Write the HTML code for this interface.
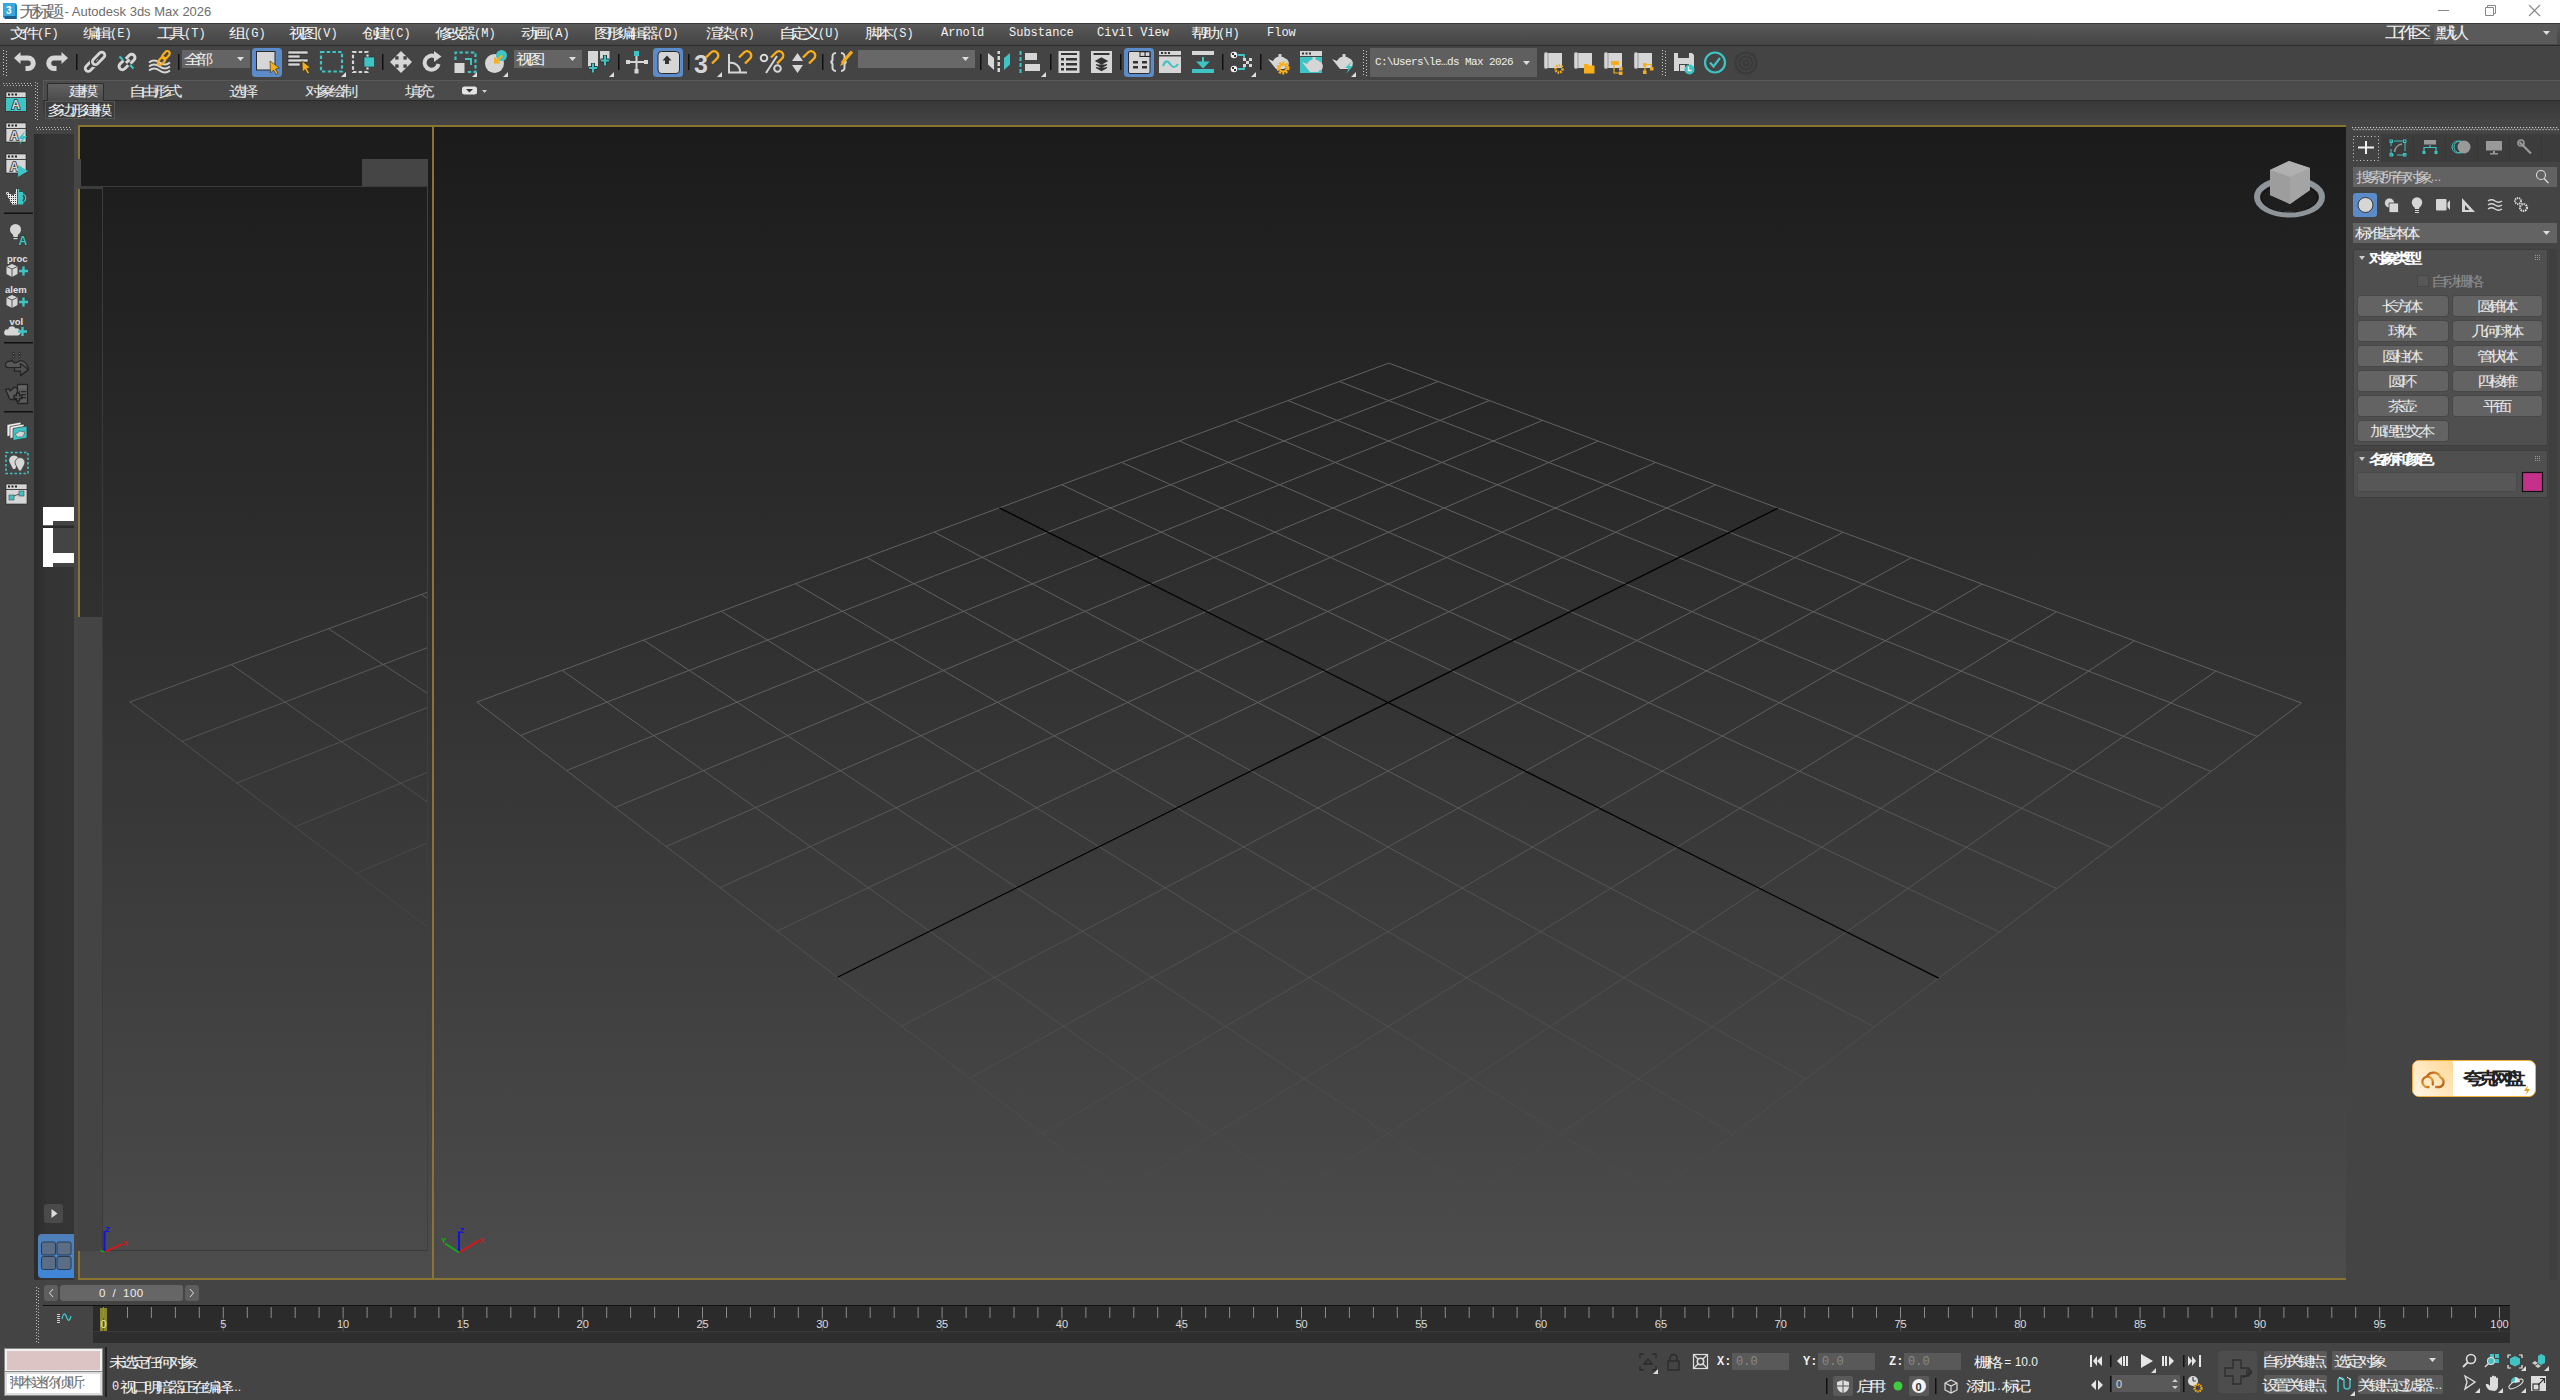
<!DOCTYPE html><html><head><meta charset="utf-8"><style>
*{margin:0;padding:0;box-sizing:border-box}
html,body{width:2560px;height:1400px;overflow:hidden;background:#444;font-family:"Liberation Sans",sans-serif;color:#ddd}
.a{position:absolute}
.t{position:absolute;white-space:nowrap;font-size:12px;line-height:14px}
.m{font-family:"Liberation Mono",monospace}
.c{display:inline-block;width:1em;text-align:center;font-style:normal;font-family:"Liberation Sans",sans-serif;transform:scale(1.5,1.2)}
.btn{position:absolute;background:#636363;border-radius:3px;box-shadow:0 0 0 1px #474747;text-align:center;font-size:12px;line-height:20px;color:#e6e6e6;white-space:nowrap}
svg{position:absolute;overflow:visible}
</style></head><body>

<div class="a" style="left:0;top:0;width:2560px;height:23px;background:#fff"></div>
<svg style="left:0;top:0" width="24" height="23"><path d="M3 3H15L17 5V19H5L3 17Z" fill="#2784c4"/><path d="M3 3H15V16H3Z" fill="#38a8e0"/><rect x="5" y="16" width="11" height="3" fill="#1d5f8f"/><text x="6" y="13.5" font-size="10" font-weight="bold" fill="#fff" font-family="Liberation Sans">3</text></svg>
<div class="t" style="left:22px;top:4px;color:#6e6e6e;font-size:13px;line-height:15px"><i class="c">无</i><i class="c">标</i><i class="c">题</i> - Autodesk 3ds Max 2026</div>
<svg style="left:2430px;top:0" width="130" height="23"><path d="M8 10.5H19" stroke="#888" stroke-width="1"/><path d="M55.5 7.5H63.5V15.5H55.5Z M57.5 7.5V5.5H65.5V13.5H63.5" fill="none" stroke="#888" stroke-width="1"/><path d="M99 5L110 16M110 5L99 16" stroke="#888" stroke-width="1.1"/></svg>
<div class="a" style="left:0;top:23px;width:2560px;height:22px;background:linear-gradient(#595959,#4e4e4e 50%,#454545);border-top:1px solid #3a3a3a"></div>
<div class="a" style="left:0;top:45px;width:2560px;height:1px;background:#2b2b2b"></div>
<div class="t m" style="left:13px;top:25px;color:#f2f2f2;font-size:12px;line-height:16px"><i class="c">文</i><i class="c">件</i>(F)</div>
<div class="t m" style="left:86px;top:25px;color:#f2f2f2;font-size:12px;line-height:16px"><i class="c">编</i><i class="c">辑</i>(E)</div>
<div class="t m" style="left:160px;top:25px;color:#f2f2f2;font-size:12px;line-height:16px"><i class="c">工</i><i class="c">具</i>(T)</div>
<div class="t m" style="left:232px;top:25px;color:#f2f2f2;font-size:12px;line-height:16px"><i class="c">组</i>(G)</div>
<div class="t m" style="left:292px;top:25px;color:#f2f2f2;font-size:12px;line-height:16px"><i class="c">视</i><i class="c">图</i>(V)</div>
<div class="t m" style="left:365px;top:25px;color:#f2f2f2;font-size:12px;line-height:16px"><i class="c">创</i><i class="c">建</i>(C)</div>
<div class="t m" style="left:438px;top:25px;color:#f2f2f2;font-size:12px;line-height:16px"><i class="c">修</i><i class="c">改</i><i class="c">器</i>(M)</div>
<div class="t m" style="left:524px;top:25px;color:#f2f2f2;font-size:12px;line-height:16px"><i class="c">动</i><i class="c">画</i>(A)</div>
<div class="t m" style="left:597px;top:25px;color:#f2f2f2;font-size:12px;line-height:16px"><i class="c">图</i><i class="c">形</i><i class="c">编</i><i class="c">辑</i><i class="c">器</i>(D)</div>
<div class="t m" style="left:709px;top:25px;color:#f2f2f2;font-size:12px;line-height:16px"><i class="c">渲</i><i class="c">染</i>(R)</div>
<div class="t m" style="left:782px;top:25px;color:#f2f2f2;font-size:12px;line-height:16px"><i class="c">自</i><i class="c">定</i><i class="c">义</i>(U)</div>
<div class="t m" style="left:868px;top:25px;color:#f2f2f2;font-size:12px;line-height:16px"><i class="c">脚</i><i class="c">本</i>(S)</div>
<div class="t m" style="left:941px;top:25px;color:#f2f2f2;font-size:12px;line-height:16px">Arnold</div>
<div class="t m" style="left:1009px;top:25px;color:#f2f2f2;font-size:12px;line-height:16px">Substance</div>
<div class="t m" style="left:1097px;top:25px;color:#f2f2f2;font-size:12px;line-height:16px">Civil View</div>
<div class="t m" style="left:1194px;top:25px;color:#f2f2f2;font-size:12px;line-height:16px"><i class="c">帮</i><i class="c">助</i>(H)</div>
<div class="t m" style="left:1267px;top:25px;color:#f2f2f2;font-size:12px;line-height:16px">Flow</div>
<div class="t" style="left:2388px;top:26px;color:#eee;font-size:13px"><i class="c">工</i><i class="c">作</i><i class="c">区</i>:</div>
<div class="a" style="left:2434px;top:24px;width:123px;height:20px;background:#5a5a5a"></div>
<div class="t" style="left:2439px;top:26px;color:#eee;font-size:13px"><i class="c">默</i><i class="c">认</i></div>
<svg style="left:2543px;top:31px" width="8" height="5"><path d="M0 0H7L3.5 4Z" fill="#ddd"/></svg>
<div class="a" style="left:0;top:46px;width:2560px;height:34px;background:#444"></div>
<svg style="left:0;top:0" width="2560" height="82"><rect x="3" y="50" width="1" height="1" fill="#ccc"/><rect x="6" y="51" width="1" height="1" fill="#ccc"/><rect x="3" y="53" width="1" height="1" fill="#ccc"/><rect x="6" y="54" width="1" height="1" fill="#ccc"/><rect x="3" y="56" width="1" height="1" fill="#ccc"/><rect x="6" y="57" width="1" height="1" fill="#ccc"/><rect x="3" y="59" width="1" height="1" fill="#ccc"/><rect x="6" y="60" width="1" height="1" fill="#ccc"/><rect x="3" y="62" width="1" height="1" fill="#ccc"/><rect x="6" y="63" width="1" height="1" fill="#ccc"/><rect x="3" y="65" width="1" height="1" fill="#ccc"/><rect x="6" y="66" width="1" height="1" fill="#ccc"/><rect x="3" y="68" width="1" height="1" fill="#ccc"/><rect x="6" y="69" width="1" height="1" fill="#ccc"/><rect x="3" y="71" width="1" height="1" fill="#ccc"/><rect x="6" y="72" width="1" height="1" fill="#ccc"/><rect x="3" y="74" width="1" height="1" fill="#ccc"/><rect x="6" y="75" width="1" height="1" fill="#ccc"/><g fill="none" stroke="#d6d6d6" stroke-width="5"><path d="M19 58H28A5.25 5.25 0 0 1 28 68.5H25.5"/></g><path d="M14 58L20.5 52V64Z" fill="#d6d6d6"/><g transform="translate(82,0) scale(-1,1)"><g fill="none" stroke="#d6d6d6" stroke-width="5"><path d="M19 58H28A5.25 5.25 0 0 1 28 68.5H25.5"/></g><path d="M14 58L20.5 52V64Z" fill="#d6d6d6"/></g><rect x="76" y="54" width="1.5" height="16" fill="#111"/><g fill="none" stroke-width="2.8"><rect x="-7.5" y="-3" width="15" height="6" rx="3" transform="translate(91.4,65.1) rotate(-45)" stroke="#d6d6d6"/><rect x="-7.5" y="-3" width="15" height="6" rx="3" transform="translate(98.6,58.4) rotate(-45)" stroke="#444" stroke-width="5.5"/><rect x="-7.5" y="-3" width="15" height="6" rx="3" transform="translate(98.6,58.4) rotate(-45)" stroke="#d6d6d6"/></g><g fill="none" stroke="#d6d6d6" stroke-width="3"><path d="M123.5 60.5L120 64A3.3 3.3 0 0 0 124.7 68.7L128.2 65.2"/><path d="M126 63L129.5 59.5M130.5 63.5L134 60A3.3 3.3 0 0 0 129.3 55.3L125.8 58.8"/></g><path d="M119.5 56.5L123 60M130 65L133.5 68.5" stroke="#3ec4c4" stroke-width="2.2"/><g fill="none" stroke="#d6d6d6" stroke-width="2"><path d="M149 62.5q5 -4 10.5 0t10.5 0M149 66.5q5 -4 10.5 0t10.5 0M149 70.5q5 -4 10.5 0t10.5 0"/></g><g fill="none" stroke="#f6ae1a" stroke-width="2.2"><rect x="-4.5" y="-2.4" width="9" height="4.8" rx="2.4" transform="translate(161.5,61) rotate(-50)"/><rect x="-4.5" y="-2.4" width="9" height="4.8" rx="2.4" transform="translate(166,55) rotate(-50)"/></g><rect x="178" y="54" width="1.5" height="16" fill="#111"/><rect x="182" y="50" width="68" height="18" fill="#646464"/><path d="M237 57.0h7l-3.5 4z" fill="#ddd"/><rect x="252" y="48" width="30" height="29" rx="3.5" fill="#5b8bc9"/><rect x="256.5" y="51.5" width="18.5" height="18.5" fill="#d6d6d6" stroke="#2a2a2a" stroke-width="1"/><path d="M270 61L279.5 68L275.5 69L278 73.5L276 74.5L273.5 70L270.5 73Z" fill="#f6ae1a" stroke="#2a2a2a" stroke-width="0.6"/><g fill="#d6d6d6" stroke="#2a2a2a" stroke-width=".6"><rect x="288" y="51" width="20" height="3"/><rect x="288" y="55" width="12" height="3"/><rect x="288" y="59" width="20" height="3"/><rect x="288" y="63" width="12" height="3"/></g><path d="M302 61L310.5 67.5L307 68.5L309.5 73L307.5 74L305 69.5L302.5 72Z" fill="#f6ae1a" stroke="#2a2a2a" stroke-width="0.6"/><rect x="321" y="52" width="21" height="19.5" fill="none" stroke="#3ec4c4" stroke-width="2.2" stroke-dasharray="3.5 2.2"/><path d="M346 77L346 72L341 77Z" fill="#ddd"/><rect x="353" y="52" width="14.5" height="20" fill="none" stroke="#d6d6d6" stroke-width="2.2" stroke-dasharray="3.5 2.2"/><rect x="364" y="57" width="10.5" height="10" fill="#3ec4c4" stroke="#2a2a2a" stroke-width=".6"/><rect x="382" y="54" width="1.5" height="16" fill="#111"/><path d="M401 51L412 62L401 73L390 62Z" fill="#d6d6d6"/><g fill="#444"><rect x="395.2" y="56.2" width="3.4" height="3.4"/><rect x="403.4" y="56.2" width="3.4" height="3.4"/><rect x="395.2" y="64.4" width="3.4" height="3.4"/><rect x="403.4" y="64.4" width="3.4" height="3.4"/></g><path d="M438.5 64A7 7 0 1 1 435 56.5" fill="none" stroke="#d6d6d6" stroke-width="4"/><path d="M434 51L441.5 56.5L434 62Z" fill="#d6d6d6"/><path d="M455.5 60V52.5H475.5V72H467" fill="none" stroke="#3ec4c4" stroke-width="2.2" stroke-dasharray="3.5 2.2"/><path d="M465 59H471V65" fill="none" stroke="#3ec4c4" stroke-width="2"/><rect x="454.5" y="63" width="10" height="10" fill="#d6d6d6"/><path d="M477 77L477 72L472 77Z" fill="#ddd"/><circle cx="494.5" cy="63.5" r="9.5" fill="#d6d6d6"/><circle cx="501.5" cy="55.5" r="5.5" fill="#3ec4c4"/><path d="M502 55.5L496 61.5M495 57.5V62.5H500" fill="none" stroke="#f6ae1a" stroke-width="2" /><path d="M502 55.5L496 61.5" stroke="#f6ae1a" stroke-width="2.2"/><path d="M508 77L508 72L503 77Z" fill="#ddd"/><rect x="514" y="50" width="68" height="18" fill="#646464"/><path d="M569 57.0h7l-3.5 4z" fill="#ddd"/><path d="M588 51H598V67H588Z M600 51H609.5V60H600Z" fill="#d6d6d6"/><path d="M593 63V73M588.5 68H597.5M605 55V66M600.5 60.5H609.5" stroke="#333" stroke-width="4"/><path d="M593 63.5V72.5M589 68H597M605 55.5V65.5M601 60.5H609" stroke="#3ec4c4" stroke-width="2.2"/><path d="M614 77L614 72L609 77Z" fill="#ddd"/><rect x="618" y="54" width="1.5" height="16" fill="#111"/><path d="M636.5 56V72M627 62H647" stroke="#d6d6d6" stroke-width="2"/><rect x="634" y="51" width="5" height="5" fill="#3ec4c4"/><rect x="626" y="60" width="4" height="4" fill="#d6d6d6"/><rect x="644" y="60" width="4" height="4" fill="#d6d6d6"/><rect x="634.5" y="69" width="4" height="4.5" fill="#d6d6d6"/><rect x="653" y="48" width="30" height="29" rx="3.5" fill="#5b8bc9"/><rect x="658" y="51.5" width="21.5" height="22" rx="3.5" fill="#d6d6d6" stroke="#2a2a2a" stroke-width="1"/><path d="M662.5 60.5L667 55.5L671.5 60.5H669V64H665V60.5Z" fill="#333"/><rect x="688" y="54" width="1.5" height="16" fill="#111"/><text x="694" y="73" font-family="Liberation Sans" font-weight="bold" font-size="25" fill="#d6d6d6">3</text><path d="M706 57.5L711 52.5A4.2 4.2 0 0 1 717 58.5L712 63.5" fill="none" stroke="#f6ae1a" stroke-width="2.4"/><path d="M722 77L722 72L717 77Z" fill="#ddd"/><path d="M729 54V72.5H747M729 63A9 9 0 0 1 740 72.5" fill="none" stroke="#d6d6d6" stroke-width="2"/><path d="M739 57.5L744 52.5A4.2 4.2 0 0 1 750 58.5L745 63.5" fill="none" stroke="#f6ae1a" stroke-width="2.4"/><circle cx="764" cy="58" r="3.3" fill="none" stroke="#d6d6d6" stroke-width="2"/><circle cx="777.5" cy="68.5" r="3.3" fill="none" stroke="#d6d6d6" stroke-width="2"/><path d="M766 73L777 56" stroke="#d6d6d6" stroke-width="2"/><path d="M771 57.5L776 52.5A4.2 4.2 0 0 1 782 58.5L777 63.5" fill="none" stroke="#f6ae1a" stroke-width="2.4"/><path d="M792 61H803L797.5 53Z M792 65H803L797.5 73Z" fill="#d6d6d6"/><path d="M803 57.5L808 52.5A4.2 4.2 0 0 1 814 58.5L809 63.5" fill="none" stroke="#f6ae1a" stroke-width="2.4"/><rect x="822" y="54" width="1.5" height="16" fill="#111"/><path d="M836 53Q832 53 832.5 58Q833 61.5 830.5 62Q833 62.5 832.5 66Q832 71 836 71M841 53Q845 53 844.5 58Q844 61.5 846.5 62Q844 62.5 844.5 66Q845 71 841 71" fill="none" stroke="#d6d6d6" stroke-width="2"/><path d="M842 63L852 51.5" stroke="#f6ae1a" stroke-width="3.2"/><path d="M840 66L842 62L844 64Z" fill="#f6ae1a"/><rect x="858" y="50" width="117" height="18" fill="#686868"/><path d="M962 57.0h7l-3.5 4z" fill="#ddd"/><rect x="980" y="54" width="1.5" height="16" fill="#111"/><path d="M988 53L994 58V70L988 64.5Z" fill="#d6d6d6"/><path d="M1010 53L1004 58V70L1010 64.5Z" fill="#3ec4c4"/><g fill="#d6d6d6"><rect x="997.5" y="51" width="2.5" height="3"/><rect x="997.5" y="56" width="2.5" height="4"/><rect x="997.5" y="62" width="2.5" height="4"/><rect x="997.5" y="68" width="2.5" height="4"/></g><g fill="#3ec4c4"><rect x="1019.5" y="51" width="2" height="4"/><rect x="1019.5" y="57" width="2" height="4"/><rect x="1019.5" y="63" width="2" height="4"/><rect x="1019.5" y="69" width="2" height="4"/></g><rect x="1025" y="53" width="12" height="7" fill="#d6d6d6"/><rect x="1025" y="64" width="15" height="7" fill="#d6d6d6"/><path d="M1046 77L1046 72L1041 77Z" fill="#ddd"/><rect x="1050" y="54" width="1.5" height="16" fill="#111"/><rect x="1058.5" y="51" width="21" height="22" fill="#d6d6d6"/><g fill="#333"><rect x="1061" y="53" width="16" height="2"/><rect x="1061" y="58" width="3" height="2.5"/><rect x="1066" y="58" width="11" height="2.5"/><rect x="1061" y="63" width="3" height="2.5"/><rect x="1066" y="63" width="11" height="2.5"/><rect x="1061" y="68" width="3" height="2.5"/><rect x="1066" y="68" width="11" height="2.5"/></g><rect x="1091" y="51" width="21" height="22" fill="#d6d6d6"/><rect x="1093.5" y="53" width="16" height="2" fill="#333"/><path d="M1101.5 58L1107 61L1101.5 64L1096 61Z M1096 64.5L1101.5 67.5L1107 64.5 M1096 67.5L1101.5 70.5L1107 67.5" fill="#333" stroke="#333" stroke-width="1.2"/><rect x="1120" y="54" width="1.5" height="16" fill="#111"/><rect x="1124" y="48" width="30" height="29" rx="3.5" fill="#5b8bc9"/><rect x="1128.5" y="51.5" width="21.5" height="22" rx="1.5" fill="#d6d6d6" stroke="#2a2a2a" stroke-width="1"/><rect x="1139.5" y="51.5" width="11" height="5.5" fill="#222"/><rect x="1140.5" y="52.3" width="4" height="3.6" fill="#d6d6d6"/><rect x="1145.6" y="52.3" width="3.8" height="3.6" fill="#d6d6d6"/><g fill="#333"><rect x="1133" y="61" width="5" height="2.5"/><rect x="1142" y="61" width="5" height="2.5"/><rect x="1133" y="66" width="5" height="2.5"/><rect x="1142" y="66" width="5" height="2.5"/></g><rect x="1159" y="51" width="22" height="22" fill="#d6d6d6"/><rect x="1159" y="55" width="22" height="1.5" fill="#444"/><g fill="#333"><rect x="1161" y="52" width="2" height="2"/><rect x="1164.5" y="52" width="2" height="2"/><rect x="1168" y="52" width="2" height="2"/></g><path d="M1163 66Q1166 58 1170 64T1178 64" fill="none" stroke="#3ec4c4" stroke-width="2.2"/><rect x="1192" y="51" width="22" height="4" fill="#d6d6d6"/><rect x="1192" y="69" width="22" height="4" fill="#3ec4c4"/><path d="M1203 57V63M1198.5 62.5L1203 67L1207.5 62.5Z" fill="#3ec4c4" stroke="#3ec4c4" stroke-width="2"/><rect x="1222" y="54" width="1.5" height="16" fill="#111"/><g fill="#eee"><circle cx="1234" cy="55" r="3.3"/><circle cx="1234" cy="69" r="3.3"/></g><g fill="#333"><rect x="1232" y="53" width="2" height="2"/><rect x="1234" y="55" width="2" height="2"/><rect x="1232" y="67" width="2" height="2"/><rect x="1234" y="69" width="2" height="2"/></g><path d="M1238 55H1244V59M1238 69H1244V65" fill="none" stroke="#3ec4c4" stroke-width="1.8"/><g fill="#d6d6d6"><rect x="1243" y="58" width="3" height="3"/><rect x="1249" y="58" width="3" height="3"/><rect x="1246" y="61" width="3" height="3"/><rect x="1243" y="64" width="3" height="3"/><rect x="1249" y="64" width="3" height="3"/></g><path d="M1256 77L1256 72L1251 77Z" fill="#ddd"/><rect x="1260" y="54" width="1.5" height="16" fill="#111"/><path d="M1268 59L1273 61Q1276 56 1280 57Q1284 56 1286 60Q1289 62 1287 66L1284 69H1276Z" fill="#d6d6d6"/><rect x="1278.5" y="54" width="3" height="3" fill="#d6d6d6"/><path d="M1285 59A4 4.5 0 0 1 1286.5 67" fill="none" stroke="#d6d6d6" stroke-width="1.6"/><circle cx="1283" cy="68" r="5" fill="none" stroke="#f6ae1a" stroke-width="3" stroke-dasharray="2 1.2"/><circle cx="1283" cy="68" r="3.5" fill="none" stroke="#f6ae1a" stroke-width="2"/><rect x="1300" y="51" width="22" height="5" fill="#d6d6d6"/><g fill="#333"><rect x="1302" y="52.5" width="2" height="2"/><rect x="1305.5" y="52.5" width="2" height="2"/><rect x="1309" y="52.5" width="2" height="2"/></g><rect x="1300" y="57" width="22" height="16" fill="#3ec4c4"/><path d="M1302 62L1307 64Q1310 59 1314 60Q1318 59 1320 63Q1323 65 1321 69L1318 72H1310Z" fill="#d6d6d6"/><rect x="1312.5" y="57" width="3" height="3" fill="#d6d6d6"/><path d="M1319 62A4 4.5 0 0 1 1320.5 70" fill="none" stroke="#d6d6d6" stroke-width="1.6"/><path d="M1332 59L1337 61Q1340 56 1344 57Q1348 56 1350 60Q1353 62 1351 66L1348 69H1340Z" fill="#d6d6d6"/><rect x="1342.5" y="54" width="3" height="3" fill="#d6d6d6"/><path d="M1349 59A4 4.5 0 0 1 1350.5 67" fill="none" stroke="#d6d6d6" stroke-width="1.6"/><path d="M1352 61L1345 68H1349L1346 74L1353 66H1349Z" fill="#3ec4c4"/><path d="M1356 77L1356 72L1351 77Z" fill="#ddd"/><rect x="1363" y="50" width="1" height="1" fill="#ccc"/><rect x="1366" y="51" width="1" height="1" fill="#ccc"/><rect x="1363" y="53" width="1" height="1" fill="#ccc"/><rect x="1366" y="54" width="1" height="1" fill="#ccc"/><rect x="1363" y="56" width="1" height="1" fill="#ccc"/><rect x="1366" y="57" width="1" height="1" fill="#ccc"/><rect x="1363" y="59" width="1" height="1" fill="#ccc"/><rect x="1366" y="60" width="1" height="1" fill="#ccc"/><rect x="1363" y="62" width="1" height="1" fill="#ccc"/><rect x="1366" y="63" width="1" height="1" fill="#ccc"/><rect x="1363" y="65" width="1" height="1" fill="#ccc"/><rect x="1366" y="66" width="1" height="1" fill="#ccc"/><rect x="1363" y="68" width="1" height="1" fill="#ccc"/><rect x="1366" y="69" width="1" height="1" fill="#ccc"/><rect x="1363" y="71" width="1" height="1" fill="#ccc"/><rect x="1366" y="72" width="1" height="1" fill="#ccc"/><rect x="1363" y="74" width="1" height="1" fill="#ccc"/><rect x="1366" y="75" width="1" height="1" fill="#ccc"/><rect x="1370" y="48" width="167" height="29" fill="#5f5f5f"/><path d="M1523 61h7l-3.5 4z" fill="#ddd"/><path d="M1546 53H1562V68H1546Z" fill="#d6d6d6"/><rect x="1544" y="52" width="4" height="17" rx="2" fill="#d6d6d6" stroke="#555" stroke-width=".5"/><circle cx="1559" cy="69" r="3.5" fill="none" stroke="#f6ae1a" stroke-width="2.6" stroke-dasharray="1.6 1"/><path d="M1576 53H1592V68H1576Z" fill="#d6d6d6"/><rect x="1574" y="52" width="4" height="17" rx="2" fill="#d6d6d6" stroke="#555" stroke-width=".5"/><path d="M1584 64H1588L1589 65.5H1594.5V73.5H1584Z" fill="#f6ae1a"/><path d="M1606 53H1622V68H1606Z" fill="#d6d6d6"/><rect x="1604" y="52" width="4" height="17" rx="2" fill="#d6d6d6" stroke="#555" stroke-width=".5"/><g fill="#f6ae1a"><rect x="1611" y="61" width="8" height="4"/><rect x="1619" y="67" width="3.5" height="3.5"/><rect x="1619" y="71.5" width="3.5" height="3.5"/></g><path d="M1614 65V73H1619" fill="none" stroke="#f6ae1a" stroke-width="1.2"/><path d="M1636 53H1652V68H1636Z" fill="#d6d6d6"/><rect x="1634" y="52" width="4" height="17" rx="2" fill="#d6d6d6" stroke="#555" stroke-width=".5"/><g fill="#f6ae1a"><rect x="1643" y="63" width="3.5" height="3.5"/><rect x="1650" y="67" width="3.5" height="3.5"/><rect x="1643" y="70.5" width="3.5" height="3.5"/></g><path d="M1645 66V71M1646 64.5H1651.5V67" fill="none" stroke="#f6ae1a" stroke-width="1.2"/><rect x="1662" y="50" width="1" height="1" fill="#ccc"/><rect x="1665" y="51" width="1" height="1" fill="#ccc"/><rect x="1662" y="53" width="1" height="1" fill="#ccc"/><rect x="1665" y="54" width="1" height="1" fill="#ccc"/><rect x="1662" y="56" width="1" height="1" fill="#ccc"/><rect x="1665" y="57" width="1" height="1" fill="#ccc"/><rect x="1662" y="59" width="1" height="1" fill="#ccc"/><rect x="1665" y="60" width="1" height="1" fill="#ccc"/><rect x="1662" y="62" width="1" height="1" fill="#ccc"/><rect x="1665" y="63" width="1" height="1" fill="#ccc"/><rect x="1662" y="65" width="1" height="1" fill="#ccc"/><rect x="1665" y="66" width="1" height="1" fill="#ccc"/><rect x="1662" y="68" width="1" height="1" fill="#ccc"/><rect x="1665" y="69" width="1" height="1" fill="#ccc"/><rect x="1662" y="71" width="1" height="1" fill="#ccc"/><rect x="1665" y="72" width="1" height="1" fill="#ccc"/><rect x="1662" y="74" width="1" height="1" fill="#ccc"/><rect x="1665" y="75" width="1" height="1" fill="#ccc"/><path d="M1674 53H1692L1694 55V71H1674Z" fill="#d6d6d6"/><rect x="1678" y="53" width="11" height="5" fill="#444"/><rect x="1679" y="64" width="10" height="7" fill="#444"/><rect x="1680" y="65" width="5" height="6" fill="#d6d6d6"/><circle cx="1689.5" cy="69.5" r="5" fill="#3ec4c4"/><path d="M1688.5 66.5V70.5H1691.5" fill="none" stroke="#eee" stroke-width="1.4"/><circle cx="1715" cy="62.5" r="10" fill="none" stroke="#3ec4c4" stroke-width="2.2"/><path d="M1710 62.5L1713.5 66.5L1720 58" fill="none" stroke="#3ec4c4" stroke-width="2.2"/><g fill="none" stroke="#3a3a3a" stroke-width="2"><circle cx="1746" cy="63" r="10.5"/><circle cx="1746" cy="63" r="6.5"/><circle cx="1746" cy="63" r="2.5"/></g></svg>
<div class="t" style="left:187px;top:52px;color:#eee;font-size:12px"><i class="c">全</i><i class="c">部</i></div>
<div class="t" style="left:519px;top:52px;color:#eee;font-size:12px"><i class="c">视</i><i class="c">图</i></div>
<div class="t m" style="left:1375px;top:55px;color:#eee;font-size:11px;letter-spacing:-0.6px">C:\Users\le…ds Max 2026</div>
<div class="a" style="left:0;top:80px;width:2560px;height:40px;background:#444"></div>
<div class="a" style="left:43px;top:80px;width:2517px;height:20px;background:#4b4b4b;border-top:1px solid #595959;border-left:1px solid #595959"></div>
<div class="a" style="left:43px;top:100px;width:2517px;height:19px;background:linear-gradient(#383838,#424242);border-top:1px solid #2a2a2a"></div>
<div class="a" style="left:47px;top:83px;width:57px;height:18px;background:linear-gradient(#626262,#4a4a4a);border:1px solid #2c2c2c;border-bottom:none;border-radius:2px 2px 0 0"></div>
<div class="t" style="left:72px;top:84px;color:#e6e6e6;font-size:12px"><i class="c">建</i><i class="c">模</i></div>
<div class="t" style="left:132px;top:84px;color:#e6e6e6;font-size:12px"><i class="c">自</i><i class="c">由</i><i class="c">形</i><i class="c">式</i></div>
<div class="t" style="left:232px;top:84px;color:#e6e6e6;font-size:12px"><i class="c">选</i><i class="c">择</i></div>
<div class="t" style="left:308px;top:84px;color:#e6e6e6;font-size:12px"><i class="c">对</i><i class="c">象</i><i class="c">绘</i><i class="c">制</i></div>
<div class="t" style="left:408px;top:84px;color:#e6e6e6;font-size:12px"><i class="c">填</i><i class="c">充</i></div>
<svg style="left:0;top:0" width="500" height="120"><rect x="462" y="86.5" width="15" height="8" rx="2.5" fill="#e4e4e4"/><path d="M466 89H473L469.5 92.5Z" fill="#333"/><path d="M482 90H487L484.5 93Z" fill="#ccc"/><rect x="3" y="83" width="1" height="1" fill="#bbb"/><rect x="4" y="85" width="1" height="1" fill="#bbb"/><rect x="6" y="83" width="1" height="1" fill="#bbb"/><rect x="7" y="85" width="1" height="1" fill="#bbb"/><rect x="9" y="83" width="1" height="1" fill="#bbb"/><rect x="10" y="85" width="1" height="1" fill="#bbb"/><rect x="12" y="83" width="1" height="1" fill="#bbb"/><rect x="13" y="85" width="1" height="1" fill="#bbb"/><rect x="15" y="83" width="1" height="1" fill="#bbb"/><rect x="16" y="85" width="1" height="1" fill="#bbb"/><rect x="18" y="83" width="1" height="1" fill="#bbb"/><rect x="19" y="85" width="1" height="1" fill="#bbb"/><rect x="21" y="83" width="1" height="1" fill="#bbb"/><rect x="22" y="85" width="1" height="1" fill="#bbb"/><rect x="24" y="83" width="1" height="1" fill="#bbb"/><rect x="25" y="85" width="1" height="1" fill="#bbb"/><rect x="27" y="83" width="1" height="1" fill="#bbb"/><rect x="28" y="85" width="1" height="1" fill="#bbb"/><rect x="30" y="83" width="1" height="1" fill="#bbb"/><rect x="31" y="85" width="1" height="1" fill="#bbb"/><rect x="35" y="82" width="1" height="1" fill="#bbb"/><rect x="37" y="83" width="1" height="1" fill="#bbb"/><rect x="35" y="85" width="1" height="1" fill="#bbb"/><rect x="37" y="86" width="1" height="1" fill="#bbb"/><rect x="35" y="88" width="1" height="1" fill="#bbb"/><rect x="37" y="89" width="1" height="1" fill="#bbb"/><rect x="35" y="91" width="1" height="1" fill="#bbb"/><rect x="37" y="92" width="1" height="1" fill="#bbb"/><rect x="35" y="94" width="1" height="1" fill="#bbb"/><rect x="37" y="95" width="1" height="1" fill="#bbb"/><rect x="35" y="97" width="1" height="1" fill="#bbb"/><rect x="37" y="98" width="1" height="1" fill="#bbb"/><rect x="35" y="100" width="1" height="1" fill="#bbb"/><rect x="37" y="101" width="1" height="1" fill="#bbb"/><rect x="35" y="103" width="1" height="1" fill="#bbb"/><rect x="37" y="104" width="1" height="1" fill="#bbb"/><rect x="35" y="106" width="1" height="1" fill="#bbb"/><rect x="37" y="107" width="1" height="1" fill="#bbb"/><rect x="35" y="109" width="1" height="1" fill="#bbb"/><rect x="37" y="110" width="1" height="1" fill="#bbb"/><rect x="35" y="112" width="1" height="1" fill="#bbb"/><rect x="37" y="113" width="1" height="1" fill="#bbb"/><rect x="35" y="115" width="1" height="1" fill="#bbb"/><rect x="37" y="116" width="1" height="1" fill="#bbb"/><rect x="35" y="118" width="1" height="1" fill="#bbb"/><rect x="37" y="119" width="1" height="1" fill="#bbb"/></svg>
<div class="a" style="left:45px;top:101px;width:70px;height:18px;background:#3c3c3c;border:1px solid #565656"></div>
<div class="t" style="left:50px;top:103px;color:#eee;font-size:12px"><i class="c">多</i><i class="c">边</i><i class="c">形</i><i class="c">建</i><i class="c">模</i></div>
<svg style="left:0;top:0" width="80" height="140"><rect x="36" y="127" width="1" height="1" fill="#bbb"/><rect x="37" y="129" width="1" height="1" fill="#bbb"/><rect x="39" y="127" width="1" height="1" fill="#bbb"/><rect x="40" y="129" width="1" height="1" fill="#bbb"/><rect x="42" y="127" width="1" height="1" fill="#bbb"/><rect x="43" y="129" width="1" height="1" fill="#bbb"/><rect x="45" y="127" width="1" height="1" fill="#bbb"/><rect x="46" y="129" width="1" height="1" fill="#bbb"/><rect x="48" y="127" width="1" height="1" fill="#bbb"/><rect x="49" y="129" width="1" height="1" fill="#bbb"/><rect x="51" y="127" width="1" height="1" fill="#bbb"/><rect x="52" y="129" width="1" height="1" fill="#bbb"/><rect x="54" y="127" width="1" height="1" fill="#bbb"/><rect x="55" y="129" width="1" height="1" fill="#bbb"/><rect x="57" y="127" width="1" height="1" fill="#bbb"/><rect x="58" y="129" width="1" height="1" fill="#bbb"/><rect x="60" y="127" width="1" height="1" fill="#bbb"/><rect x="61" y="129" width="1" height="1" fill="#bbb"/><rect x="63" y="127" width="1" height="1" fill="#bbb"/><rect x="64" y="129" width="1" height="1" fill="#bbb"/><rect x="66" y="127" width="1" height="1" fill="#bbb"/><rect x="67" y="129" width="1" height="1" fill="#bbb"/><rect x="69" y="127" width="1" height="1" fill="#bbb"/><rect x="70" y="129" width="1" height="1" fill="#bbb"/></svg>
<div class="a" style="left:34px;top:134px;width:40px;height:1146px;background:linear-gradient(90deg,#2c2c2c,#333 30%,#353535)"></div>
<svg style="left:0;top:0" width="80" height="600"><rect x="6" y="92" width="20" height="19" fill="#d6d6d6" stroke="#222" stroke-width=".6"/><rect x="6" y="97" width="20" height="1" fill="#444"/><g fill="#222"><rect x="8" y="93.5" width="2" height="2"/><rect x="11.5" y="93.5" width="2" height="2"/><rect x="15" y="93.5" width="2" height="2"/></g><rect x="6" y="98" width="20" height="13" fill="#3ec4c4"/><text x="11.5" y="109" font-size="12" font-weight="bold" fill="#d6d6d6" stroke="#333" stroke-width="1.6" paint-order="stroke" font-family="Liberation Sans">A</text><rect x="6" y="123" width="20" height="19" fill="#d6d6d6" stroke="#222" stroke-width=".6"/><rect x="6" y="128" width="20" height="1" fill="#444"/><g fill="#222"><rect x="8" y="124.5" width="2" height="2"/><rect x="11.5" y="124.5" width="2" height="2"/><rect x="15" y="124.5" width="2" height="2"/></g><text x="10" y="140" font-size="12" font-weight="bold" fill="#d6d6d6" stroke="#333" stroke-width="1.6" paint-order="stroke" font-family="Liberation Sans">A</text><path d="M25 131L18 139H22L19 145L27 136H23Z" fill="#3ec4c4"/><rect x="6" y="154" width="20" height="19" fill="#d6d6d6" stroke="#222" stroke-width=".6"/><rect x="6" y="159" width="20" height="1" fill="#444"/><g fill="#222"><rect x="8" y="155.5" width="2" height="2"/><rect x="11.5" y="155.5" width="2" height="2"/><rect x="15" y="155.5" width="2" height="2"/></g><text x="10" y="171" font-size="12" font-weight="bold" fill="#d6d6d6" stroke="#333" stroke-width="1.6" paint-order="stroke" font-family="Liberation Sans">A</text><path d="M18 165L28 171L18 177Z" fill="#3ec4c4"/><defs><pattern id="chk" width="2" height="2" patternUnits="userSpaceOnUse"><rect width="2" height="2" fill="#eaeaea"/><rect x="1" y="1" width="1" height="1" fill="#333"/></pattern></defs><path d="M5.8 193Q7.5 191 9.5 193.5L13 195.5Q15 193.5 16 192V189H17.2V204.5H12Z" fill="url(#chk)"/><path d="M18 189H19.2V192H23V193.5A4.6 4.8 0 0 1 23.5 202.5L23 204.5H18Z" fill="#3ec4c4"/><path d="M22.8 195.2A2.6 3.2 0 0 1 22.8 201" fill="none" stroke="#444" stroke-width="1.6"/><rect x="4" y="212.5" width="29" height="1.5" fill="#111"/><circle cx="15.5" cy="229.5" r="5.5" fill="#d6d6d6"/><path d="M12.5 233H18.5L17.5 237H13.5Z" fill="#d6d6d6"/><rect x="13.5" y="238" width="4" height="1.2" fill="#d6d6d6"/><text x="18.5" y="244.5" font-size="12" font-weight="bold" fill="#3ec4c4" stroke="#333" stroke-width="1" paint-order="stroke" font-family="Liberation Sans">A</text><text x="7" y="262" font-size="9.5" font-weight="bold" fill="#e0e0e0" font-family="Liberation Sans">proc</text><path d="M6.5 266.5L12 264L17.5 266.5V274L12 277L6.5 274Z" fill="#d6d6d6"/><path d="M6.5 266.5L12 269L17.5 266.5M12 269V277" fill="none" stroke="#555" stroke-width="1"/><path d="M19 271H28M23.5 266.5V275.5" stroke="#3ec4c4" stroke-width="2.4"/><text x="5" y="293" font-size="9.5" font-weight="bold" fill="#e0e0e0" font-family="Liberation Sans">alem</text><path d="M6.5 297.5L12 295L17.5 297.5V305L12 308L6.5 305Z" fill="#d6d6d6"/><path d="M6.5 297.5L12 300L17.5 297.5M12 300V308" fill="none" stroke="#555" stroke-width="1"/><path d="M19 302H28M23.5 297.5V306.5" stroke="#3ec4c4" stroke-width="2.4"/><text x="9.5" y="324.5" font-size="9.5" font-weight="bold" fill="#e0e0e0" font-family="Liberation Sans">vol</text><path d="M6.5 335.5A3 3 0 0 1 8 329.5A4 4 0 0 1 15.5 328.5A3 3 0 0 1 18 335.5Z" fill="#d6d6d6"/><path d="M18 331.5H27M22.5 327V336" stroke="#3ec4c4" stroke-width="2.4"/><rect x="4" y="342" width="29" height="1.5" fill="#111"/><g stroke="#232323" stroke-width="1.2" stroke-linejoin="round"><path d="M5.5 366Q5 361 10 361.5L12 360Q13.5 364 16.5 362.5L20.5 360.5Q27 361.5 28.5 369.5L21 375.5V371H14.5V367.5H10Q6 368 5.5 366Z" fill="#585858"/><path d="M14.5 367.5H20.5V363.5L28.5 369.5L20.5 375.5V371H14.5Z" fill="#505050"/></g><g fill="#2a2a2a"><rect x="12.5" y="352" width="2" height="6"/><rect x="18.5" y="352" width="2" height="6"/></g><g fill="#777"><rect x="13" y="353" width="1" height="1"/><rect x="19" y="353" width="1" height="1"/><rect x="13" y="356" width="1" height="1"/><rect x="19" y="356" width="1" height="1"/></g><g stroke="#232323" stroke-width="1.3" stroke-linejoin="round"><path d="M5.5 389.5L9 388.5L10 391L13 388.5L14.5 387L17.5 388.5V399.5H10Z" fill="#5a5a5a"/><rect x="17.5" y="384.5" width="10" height="19" fill="#5c5c5c"/><path d="M14 395.5H16.5V393H19.5V395.5H22V398.5H19.5V401H16.5V398.5H14Z" fill="#555"/></g><rect x="18.5" y="385.5" width="8" height="3" fill="#666"/><g fill="#262626"><rect x="21" y="391" width="5" height="1.3"/><rect x="21" y="394" width="5" height="1.3"/><rect x="21" y="397" width="5" height="1.3"/><rect x="19" y="391" width="1" height="1"/></g><rect x="4" y="411" width="29" height="1.5" fill="#111"/><path d="M7 424.5L21 422V434L7 436.5Z" fill="#eee" stroke="#333" stroke-width=".7"/><path d="M10 426.5L24 424V436L10 438.5Z" fill="#eee" stroke="#333" stroke-width=".7"/><path d="M13 428.5L27 426V438L13 440.5Z" fill="#3ec4c4" stroke="#333" stroke-width=".7"/><path d="M15 434L18 432.5Q19.5 430 22 431.5L25 432Q24 436 21.5 437H17.5Z" fill="#d6d6d6" stroke="#333" stroke-width=".5"/><rect x="6" y="452.5" width="22" height="21" fill="none" stroke="#3ec4c4" stroke-width="1.6" stroke-dasharray="2.5 2"/><path d="M14 455.5A4.8 4.8 0 0 1 18.5 462L15 469H13L9.5 462A4.8 4.8 0 0 1 14 455.5Z" fill="#d6d6d6"/><path d="M20 457.5A5 5 0 0 1 24.7 464L21 471H19L15.3 464A5 5 0 0 1 20 457.5Z" fill="#d6d6d6" stroke="#444" stroke-width=".8"/><rect x="6" y="484" width="21" height="20" fill="#d6d6d6" stroke="#222" stroke-width=".6"/><rect x="6" y="489" width="21" height="1" fill="#444"/><g fill="#222"><rect x="8" y="485.5" width="2" height="2"/><rect x="11.5" y="485.5" width="2" height="2"/><rect x="15" y="485.5" width="2" height="2"/></g><rect x="9" y="495" width="5" height="5" fill="#3ec4c4" stroke="#333" stroke-width=".5"/><rect x="19" y="491" width="5" height="5" fill="#3ec4c4" stroke="#333" stroke-width=".5"/><path d="M14 496L19 494" stroke="#333" stroke-width=".8"/></svg>
<svg style="left:0;top:0" width="80" height="600"><rect x="43" y="507" width="31" height="60" fill="#444"/><path d="M43 507H74V521H53V525.5H43Z M43 528H53V553H74V563H53V567H43Z" fill="#fff"/><rect x="43" y="525.5" width="31" height="2.5" fill="#2a2a2a"/></svg>
<div class="a" style="left:44px;top:1204px;width:19px;height:19px;background:#4a4a4a;border-radius:3px"></div>
<svg style="left:0;top:0" width="80" height="1300"><path d="M51.5 1209L57.5 1213.5L51.5 1218Z" fill="#ddd"/></svg>
<div class="a" style="left:38px;top:1234px;width:36px;height:44px;background:linear-gradient(#4f7fb8,#3f86d8);border-radius:4px 0 0 4px"></div>
<svg style="left:0;top:0" width="80" height="1300"><g fill="#5b6e85" stroke="#2a3a50" stroke-width="1"><rect x="41.5" y="1242" width="14" height="13" rx="2"/><rect x="57" y="1242" width="14" height="13" rx="2"/><rect x="41.5" y="1256.5" width="14" height="13" rx="2"/><rect x="57" y="1256.5" width="14" height="13" rx="2"/></g></svg>
<div class="a" style="left:74px;top:120px;width:4px;height:1160px;background:#464646"></div>
<div class="a" style="left:432px;top:125px;width:1914px;height:1155px;background:#8a7432"></div>
<div class="a" style="left:434px;top:127px;width:1912px;height:1151px;background:linear-gradient(#1b1b1b,#4c4c4c)"></div>
<div class="a" style="left:78px;top:125px;width:356px;height:1155px;background:#8a7432"></div>
<div class="a" style="left:80px;top:127px;width:352px;height:1151px;background:linear-gradient(#1b1b1b,#4c4c4c)"></div>
<svg style="left:434px;top:127px;overflow:hidden" width="1912" height="1151" viewBox="434 127 1912 1151"><defs><linearGradient id="gm" gradientUnits="userSpaceOnUse" x1="0" y1="700" x2="0" y2="1240"><stop offset="0" stop-color="#606060" stop-opacity="1"/><stop offset="1" stop-color="#606060" stop-opacity="0"/></linearGradient></defs><g stroke="url(#gm)" stroke-width="1" fill="none"><line x1="1388.8" y1="363.1" x2="476.9" y2="702.1"/><line x1="1388.8" y1="363.1" x2="2301.4" y2="703.0"/><line x1="1438.2" y1="381.5" x2="520.7" y2="735.4"/><line x1="1339.3" y1="381.5" x2="2257.4" y2="736.4"/><line x1="1489.4" y1="400.6" x2="566.6" y2="770.5"/><line x1="1288.0" y1="400.6" x2="2211.1" y2="771.5"/><line x1="1542.7" y1="420.4" x2="615.1" y2="807.5"/><line x1="1234.7" y1="420.4" x2="2162.4" y2="808.5"/><line x1="1598.0" y1="441.1" x2="666.1" y2="846.5"/><line x1="1179.4" y1="441.0" x2="2111.1" y2="847.4"/><line x1="1655.6" y1="462.5" x2="720.1" y2="887.6"/><line x1="1121.8" y1="462.4" x2="2056.8" y2="888.6"/><line x1="1715.6" y1="484.8" x2="777.1" y2="931.1"/><line x1="1061.8" y1="484.7" x2="1999.5" y2="932.1"/><line x1="1843.2" y1="532.3" x2="901.6" y2="1026.2"/><line x1="934.3" y1="532.1" x2="1874.3" y2="1027.0"/><line x1="1911.2" y1="557.7" x2="969.8" y2="1078.2"/><line x1="866.3" y1="557.3" x2="1805.9" y2="1078.9"/><line x1="1982.2" y1="584.1" x2="1042.4" y2="1133.6"/><line x1="795.4" y1="583.7" x2="1733.0" y2="1134.2"/><line x1="2056.6" y1="611.8" x2="1119.9" y2="1192.7"/><line x1="721.2" y1="611.3" x2="1655.2" y2="1193.2"/><line x1="2134.4" y1="640.8" x2="1202.7" y2="1255.9"/><line x1="643.6" y1="640.1" x2="1572.0" y2="1256.3"/><line x1="2215.9" y1="671.1" x2="1291.6" y2="1323.7"/><line x1="562.2" y1="670.4" x2="1482.9" y2="1323.9"/><line x1="2301.4" y1="703.0" x2="1387.1" y2="1396.6"/><line x1="476.9" y1="702.1" x2="1387.1" y2="1396.6"/></g><g stroke="#000" stroke-width="1.2"><line x1="1778.0" y1="508.1" x2="837.5" y2="977.2"/><line x1="999.4" y1="507.9" x2="1938.7" y2="978.1"/></g></svg>
<svg style="left:102px;top:189px;overflow:hidden" width="326" height="1061" viewBox="102 189 326 1061"><defs><linearGradient id="gl" gradientUnits="userSpaceOnUse" x1="0" y1="650" x2="0" y2="1000"><stop offset="0" stop-color="#5c5c5c" stop-opacity="1"/><stop offset="1" stop-color="#5c5c5c" stop-opacity="0"/></linearGradient></defs><g stroke="url(#gl)" stroke-width="1" fill="none"><line x1="1226.7" y1="297.6" x2="129.8" y2="702.0"/><line x1="1226.7" y1="297.6" x2="2380.6" y2="702.7"/><line x1="1287.7" y1="319.0" x2="181.9" y2="741.4"/><line x1="1166.6" y1="319.7" x2="2325.8" y2="743.6"/><line x1="1351.1" y1="341.3" x2="236.9" y2="783.0"/><line x1="1104.3" y1="342.7" x2="2268.3" y2="786.5"/><line x1="1417.2" y1="364.5" x2="294.9" y2="826.9"/><line x1="1039.7" y1="366.5" x2="2207.7" y2="831.7"/><line x1="1486.2" y1="388.7" x2="356.3" y2="873.4"/><line x1="972.6" y1="391.3" x2="2143.8" y2="879.3"/><line x1="1558.1" y1="413.9" x2="421.5" y2="922.6"/><line x1="903.0" y1="417.0" x2="2076.5" y2="929.5"/><line x1="1633.2" y1="440.3" x2="490.6" y2="974.9"/><line x1="830.6" y1="443.6" x2="2005.3" y2="982.6"/><line x1="1711.7" y1="467.9" x2="564.1" y2="1030.5"/><line x1="755.3" y1="471.4" x2="1930.0" y2="1038.8"/><line x1="1793.9" y1="496.7" x2="642.5" y2="1089.8"/><line x1="676.9" y1="500.3" x2="1850.1" y2="1098.3"/><line x1="1880.1" y1="527.0" x2="726.2" y2="1153.1"/><line x1="595.3" y1="530.4" x2="1765.2" y2="1161.6"/><line x1="1970.4" y1="558.7" x2="815.8" y2="1220.9"/><line x1="510.1" y1="561.8" x2="1675.0" y2="1228.9"/><line x1="2065.2" y1="592.0" x2="911.9" y2="1293.6"/><line x1="421.3" y1="594.6" x2="1578.7" y2="1300.7"/><line x1="2165.0" y1="627.0" x2="1015.3" y2="1371.9"/><line x1="328.5" y1="628.8" x2="1475.9" y2="1377.3"/><line x1="2269.9" y1="663.9" x2="1126.9" y2="1456.3"/><line x1="231.4" y1="664.6" x2="1365.8" y2="1459.4"/><line x1="2380.6" y1="702.7" x2="1247.6" y2="1547.6"/><line x1="129.8" y1="702.0" x2="1247.6" y2="1547.6"/></g></svg>
<div class="a" style="left:80px;top:127px;width:352px;height:59px;background:#1c1c1c"></div>
<div class="a" style="left:362px;top:159px;width:66px;height:27px;background:#454545"></div>
<div class="a" style="left:78px;top:159px;width:3px;height:30px;background:#464646"></div>
<div class="a" style="left:80px;top:186px;width:348px;height:1px;background:#3c3c3c"></div>
<div class="a" style="left:80px;top:186px;width:22px;height:3px;background:#3c3c3c"></div>
<div class="a" style="left:102px;top:187px;width:1px;height:1064px;background:#3a3a3a"></div>
<div class="a" style="left:427px;top:187px;width:1px;height:1064px;background:#3f3f3f"></div>
<div class="a" style="left:102px;top:1250px;width:326px;height:1px;background:#3a3a3a"></div>
<div class="a" style="left:78px;top:617px;width:24px;height:634px;background:#444"></div>
<svg style="left:0;top:0" width="2560" height="1400"><path d="M104.5 1252V1231" stroke="#1010e8" stroke-width="2"/><path d="M104.5 1252L122.5 1244" stroke="#e81010" stroke-width="1.6"/><text x="105.0" y="1232" font-size="8" font-weight="bold" fill="#1010e8" font-family="Liberation Sans">Z</text><text x="122.5" y="1246" font-size="8" fill="#e81010" font-family="Liberation Sans">X</text><path d="M104.5 1252L100.5 1250.5" stroke="#10b010" stroke-width="1.5"/></svg>
<svg style="left:0;top:0" width="2560" height="1400"><path d="M459 1252.5V1231.5" stroke="#1010e8" stroke-width="2"/><path d="M459 1252.5L479 1240.5" stroke="#e81010" stroke-width="1.6"/><text x="459.5" y="1232.5" font-size="8" font-weight="bold" fill="#1010e8" font-family="Liberation Sans">Z</text><text x="479" y="1242.5" font-size="8" fill="#e81010" font-family="Liberation Sans">X</text><path d="M459 1252.5L445 1243.5" stroke="#10b010" stroke-width="1.8"/><text x="441" y="1242.5" font-size="8" font-weight="bold" fill="#10b010" font-family="Liberation Sans">Y</text></svg>
<svg style="left:2250px;top:157px" width="80" height="70"><ellipse cx="39.5" cy="40" rx="32.5" ry="17.5" fill="none" stroke="#8d949a" stroke-width="6"/><ellipse cx="39.5" cy="41" rx="28" ry="14" fill="none" stroke="#151515" stroke-width="1.2"/>
<path d="M20 13L39 4L60 11V33L40 47L20 38Z" fill="#a5a5a5"/><path d="M20 13L39 4L60 11L40 20Z" fill="#b0b0b0"/><path d="M40 20V47L20 38V13Z" fill="#9d9d9d"/><path d="M40 20L60 11V33L40 47Z" fill="#a4a4a4"/></svg>
<div class="a" style="left:2346px;top:120px;width:214px;height:1160px;background:#444"></div>
<svg style="left:0;top:0" width="2560" height="1400"><rect x="2352" y="127" width="1.2" height="1.2" fill="#ccc"/><rect x="2353.5" y="129" width="1.2" height="1.2" fill="#ccc"/><rect x="2355" y="127" width="1.2" height="1.2" fill="#ccc"/><rect x="2356.5" y="129" width="1.2" height="1.2" fill="#ccc"/><rect x="2358" y="127" width="1.2" height="1.2" fill="#ccc"/><rect x="2359.5" y="129" width="1.2" height="1.2" fill="#ccc"/><rect x="2361" y="127" width="1.2" height="1.2" fill="#ccc"/><rect x="2362.5" y="129" width="1.2" height="1.2" fill="#ccc"/><rect x="2364" y="127" width="1.2" height="1.2" fill="#ccc"/><rect x="2365.5" y="129" width="1.2" height="1.2" fill="#ccc"/><rect x="2367" y="127" width="1.2" height="1.2" fill="#ccc"/><rect x="2368.5" y="129" width="1.2" height="1.2" fill="#ccc"/><rect x="2370" y="127" width="1.2" height="1.2" fill="#ccc"/><rect x="2371.5" y="129" width="1.2" height="1.2" fill="#ccc"/><rect x="2373" y="127" width="1.2" height="1.2" fill="#ccc"/><rect x="2374.5" y="129" width="1.2" height="1.2" fill="#ccc"/><rect x="2376" y="127" width="1.2" height="1.2" fill="#ccc"/><rect x="2377.5" y="129" width="1.2" height="1.2" fill="#ccc"/><rect x="2379" y="127" width="1.2" height="1.2" fill="#ccc"/><rect x="2380.5" y="129" width="1.2" height="1.2" fill="#ccc"/><rect x="2382" y="127" width="1.2" height="1.2" fill="#ccc"/><rect x="2383.5" y="129" width="1.2" height="1.2" fill="#ccc"/><rect x="2385" y="127" width="1.2" height="1.2" fill="#ccc"/><rect x="2386.5" y="129" width="1.2" height="1.2" fill="#ccc"/><rect x="2388" y="127" width="1.2" height="1.2" fill="#ccc"/><rect x="2389.5" y="129" width="1.2" height="1.2" fill="#ccc"/><rect x="2391" y="127" width="1.2" height="1.2" fill="#ccc"/><rect x="2392.5" y="129" width="1.2" height="1.2" fill="#ccc"/><rect x="2394" y="127" width="1.2" height="1.2" fill="#ccc"/><rect x="2395.5" y="129" width="1.2" height="1.2" fill="#ccc"/><rect x="2397" y="127" width="1.2" height="1.2" fill="#ccc"/><rect x="2398.5" y="129" width="1.2" height="1.2" fill="#ccc"/><rect x="2400" y="127" width="1.2" height="1.2" fill="#ccc"/><rect x="2401.5" y="129" width="1.2" height="1.2" fill="#ccc"/><rect x="2403" y="127" width="1.2" height="1.2" fill="#ccc"/><rect x="2404.5" y="129" width="1.2" height="1.2" fill="#ccc"/><rect x="2406" y="127" width="1.2" height="1.2" fill="#ccc"/><rect x="2407.5" y="129" width="1.2" height="1.2" fill="#ccc"/><rect x="2409" y="127" width="1.2" height="1.2" fill="#ccc"/><rect x="2410.5" y="129" width="1.2" height="1.2" fill="#ccc"/><rect x="2412" y="127" width="1.2" height="1.2" fill="#ccc"/><rect x="2413.5" y="129" width="1.2" height="1.2" fill="#ccc"/><rect x="2415" y="127" width="1.2" height="1.2" fill="#ccc"/><rect x="2416.5" y="129" width="1.2" height="1.2" fill="#ccc"/><rect x="2418" y="127" width="1.2" height="1.2" fill="#ccc"/><rect x="2419.5" y="129" width="1.2" height="1.2" fill="#ccc"/><rect x="2421" y="127" width="1.2" height="1.2" fill="#ccc"/><rect x="2422.5" y="129" width="1.2" height="1.2" fill="#ccc"/><rect x="2424" y="127" width="1.2" height="1.2" fill="#ccc"/><rect x="2425.5" y="129" width="1.2" height="1.2" fill="#ccc"/><rect x="2427" y="127" width="1.2" height="1.2" fill="#ccc"/><rect x="2428.5" y="129" width="1.2" height="1.2" fill="#ccc"/><rect x="2430" y="127" width="1.2" height="1.2" fill="#ccc"/><rect x="2431.5" y="129" width="1.2" height="1.2" fill="#ccc"/><rect x="2433" y="127" width="1.2" height="1.2" fill="#ccc"/><rect x="2434.5" y="129" width="1.2" height="1.2" fill="#ccc"/><rect x="2436" y="127" width="1.2" height="1.2" fill="#ccc"/><rect x="2437.5" y="129" width="1.2" height="1.2" fill="#ccc"/><rect x="2439" y="127" width="1.2" height="1.2" fill="#ccc"/><rect x="2440.5" y="129" width="1.2" height="1.2" fill="#ccc"/><rect x="2442" y="127" width="1.2" height="1.2" fill="#ccc"/><rect x="2443.5" y="129" width="1.2" height="1.2" fill="#ccc"/><rect x="2445" y="127" width="1.2" height="1.2" fill="#ccc"/><rect x="2446.5" y="129" width="1.2" height="1.2" fill="#ccc"/><rect x="2448" y="127" width="1.2" height="1.2" fill="#ccc"/><rect x="2449.5" y="129" width="1.2" height="1.2" fill="#ccc"/><rect x="2451" y="127" width="1.2" height="1.2" fill="#ccc"/><rect x="2452.5" y="129" width="1.2" height="1.2" fill="#ccc"/><rect x="2454" y="127" width="1.2" height="1.2" fill="#ccc"/><rect x="2455.5" y="129" width="1.2" height="1.2" fill="#ccc"/><rect x="2457" y="127" width="1.2" height="1.2" fill="#ccc"/><rect x="2458.5" y="129" width="1.2" height="1.2" fill="#ccc"/><rect x="2460" y="127" width="1.2" height="1.2" fill="#ccc"/><rect x="2461.5" y="129" width="1.2" height="1.2" fill="#ccc"/><rect x="2463" y="127" width="1.2" height="1.2" fill="#ccc"/><rect x="2464.5" y="129" width="1.2" height="1.2" fill="#ccc"/><rect x="2466" y="127" width="1.2" height="1.2" fill="#ccc"/><rect x="2467.5" y="129" width="1.2" height="1.2" fill="#ccc"/><rect x="2469" y="127" width="1.2" height="1.2" fill="#ccc"/><rect x="2470.5" y="129" width="1.2" height="1.2" fill="#ccc"/><rect x="2472" y="127" width="1.2" height="1.2" fill="#ccc"/><rect x="2473.5" y="129" width="1.2" height="1.2" fill="#ccc"/><rect x="2475" y="127" width="1.2" height="1.2" fill="#ccc"/><rect x="2476.5" y="129" width="1.2" height="1.2" fill="#ccc"/><rect x="2478" y="127" width="1.2" height="1.2" fill="#ccc"/><rect x="2479.5" y="129" width="1.2" height="1.2" fill="#ccc"/><rect x="2481" y="127" width="1.2" height="1.2" fill="#ccc"/><rect x="2482.5" y="129" width="1.2" height="1.2" fill="#ccc"/><rect x="2484" y="127" width="1.2" height="1.2" fill="#ccc"/><rect x="2485.5" y="129" width="1.2" height="1.2" fill="#ccc"/><rect x="2487" y="127" width="1.2" height="1.2" fill="#ccc"/><rect x="2488.5" y="129" width="1.2" height="1.2" fill="#ccc"/><rect x="2490" y="127" width="1.2" height="1.2" fill="#ccc"/><rect x="2491.5" y="129" width="1.2" height="1.2" fill="#ccc"/><rect x="2493" y="127" width="1.2" height="1.2" fill="#ccc"/><rect x="2494.5" y="129" width="1.2" height="1.2" fill="#ccc"/><rect x="2496" y="127" width="1.2" height="1.2" fill="#ccc"/><rect x="2497.5" y="129" width="1.2" height="1.2" fill="#ccc"/><rect x="2499" y="127" width="1.2" height="1.2" fill="#ccc"/><rect x="2500.5" y="129" width="1.2" height="1.2" fill="#ccc"/><rect x="2502" y="127" width="1.2" height="1.2" fill="#ccc"/><rect x="2503.5" y="129" width="1.2" height="1.2" fill="#ccc"/><rect x="2505" y="127" width="1.2" height="1.2" fill="#ccc"/><rect x="2506.5" y="129" width="1.2" height="1.2" fill="#ccc"/><rect x="2508" y="127" width="1.2" height="1.2" fill="#ccc"/><rect x="2509.5" y="129" width="1.2" height="1.2" fill="#ccc"/><rect x="2511" y="127" width="1.2" height="1.2" fill="#ccc"/><rect x="2512.5" y="129" width="1.2" height="1.2" fill="#ccc"/><rect x="2514" y="127" width="1.2" height="1.2" fill="#ccc"/><rect x="2515.5" y="129" width="1.2" height="1.2" fill="#ccc"/><rect x="2517" y="127" width="1.2" height="1.2" fill="#ccc"/><rect x="2518.5" y="129" width="1.2" height="1.2" fill="#ccc"/><rect x="2520" y="127" width="1.2" height="1.2" fill="#ccc"/><rect x="2521.5" y="129" width="1.2" height="1.2" fill="#ccc"/><rect x="2523" y="127" width="1.2" height="1.2" fill="#ccc"/><rect x="2524.5" y="129" width="1.2" height="1.2" fill="#ccc"/><rect x="2526" y="127" width="1.2" height="1.2" fill="#ccc"/><rect x="2527.5" y="129" width="1.2" height="1.2" fill="#ccc"/><rect x="2529" y="127" width="1.2" height="1.2" fill="#ccc"/><rect x="2530.5" y="129" width="1.2" height="1.2" fill="#ccc"/><rect x="2532" y="127" width="1.2" height="1.2" fill="#ccc"/><rect x="2533.5" y="129" width="1.2" height="1.2" fill="#ccc"/><rect x="2535" y="127" width="1.2" height="1.2" fill="#ccc"/><rect x="2536.5" y="129" width="1.2" height="1.2" fill="#ccc"/><rect x="2538" y="127" width="1.2" height="1.2" fill="#ccc"/><rect x="2539.5" y="129" width="1.2" height="1.2" fill="#ccc"/><rect x="2541" y="127" width="1.2" height="1.2" fill="#ccc"/><rect x="2542.5" y="129" width="1.2" height="1.2" fill="#ccc"/><rect x="2544" y="127" width="1.2" height="1.2" fill="#ccc"/><rect x="2545.5" y="129" width="1.2" height="1.2" fill="#ccc"/><rect x="2547" y="127" width="1.2" height="1.2" fill="#ccc"/><rect x="2548.5" y="129" width="1.2" height="1.2" fill="#ccc"/><rect x="2550" y="127" width="1.2" height="1.2" fill="#ccc"/><rect x="2551.5" y="129" width="1.2" height="1.2" fill="#ccc"/><rect x="2553" y="127" width="1.2" height="1.2" fill="#ccc"/><rect x="2554.5" y="129" width="1.2" height="1.2" fill="#ccc"/><rect x="2556" y="127" width="1.2" height="1.2" fill="#ccc"/><rect x="2557.5" y="129" width="1.2" height="1.2" fill="#ccc"/><rect x="2350" y="134" width="210" height="28" fill="#3c3c3c"/><rect x="2350" y="134" width="31" height="28" fill="#434343"/><rect x="2353.5" y="136.5" width="25" height="24" fill="none" stroke="#ccc" stroke-width="1" stroke-dasharray="1 2.5"/><path d="M2366 141V154M2358 147.5H2374" stroke="#f0f0f0" stroke-width="2"/><rect x="2391" y="141" width="14" height="14" fill="none" stroke="#3ec4c4" stroke-width="1" stroke-dasharray="9 3" stroke-dashoffset="-3"/><g fill="none" stroke="#3ec4c4" stroke-width="1"><rect x="2390" y="140" width="2.5" height="2.5"/><rect x="2403.5" y="140" width="2.5" height="2.5"/><rect x="2390" y="153.5" width="2.5" height="2.5"/><rect x="2403.5" y="153.5" width="2.5" height="2.5"/></g><path d="M2394.5 152A9 9 0 0 1 2402 144" fill="none" stroke="#999" stroke-width="1.6"/><rect x="2424" y="140" width="12" height="4.5" fill="#999"/><path d="M2430 145V147M2424 151V147.5H2436V151" fill="none" stroke="#3ec4c4" stroke-width="1.2"/><rect x="2422.5" y="151" width="3" height="3" fill="#3ec4c4"/><rect x="2434.5" y="151" width="3" height="3" fill="#3ec4c4"/><circle cx="2458" cy="147" r="6" fill="none" stroke="#3ec4c4" stroke-width="1"/><circle cx="2460" cy="147" r="6" fill="none" stroke="#3ec4c4" stroke-width="1"/><circle cx="2464" cy="147" r="6.5" fill="#9a9a9a"/><rect x="2486" y="141" width="16" height="9.5" fill="#999"/><rect x="2490" y="153" width="8" height="1.5" fill="#999"/><rect x="2493" y="151" width="2" height="2" fill="#999"/><path d="M2519.5 142L2531 153.5" stroke="#999" stroke-width="2.2"/><circle cx="2521" cy="143" r="3" fill="none" stroke="#999" stroke-width="1.6"/><rect x="2413" y="138" width="1" height="22" fill="#353535"/><rect x="2445" y="138" width="1" height="22" fill="#353535"/><rect x="2477" y="138" width="1" height="22" fill="#353535"/><rect x="2509" y="138" width="1" height="22" fill="#353535"/><rect x="2541" y="138" width="1" height="22" fill="#353535"/><rect x="2353" y="167" width="204" height="20" fill="#626262"/><circle cx="2541" cy="175" r="4.5" fill="none" stroke="#ddd" stroke-width="1.1"/><path d="M2544 178.5L2548.5 183" stroke="#ddd" stroke-width="1.2"/><rect x="2353" y="193" width="24" height="24" rx="3" fill="#5b8bc9"/><circle cx="2365.5" cy="205" r="7.5" fill="#d6d6d6" stroke="#333" stroke-width="1"/><circle cx="2389.5" cy="203" r="5" fill="#d6d6d6" stroke="#444" stroke-width=".8"/><rect x="2389" y="203" width="9.5" height="9.5" fill="#d6d6d6" stroke="#444" stroke-width=".8"/><circle cx="2417" cy="202.5" r="5.2" fill="#d6d6d6"/><path d="M2414 205H2420L2419 209H2415Z" fill="#d6d6d6"/><rect x="2415" y="210" width="4" height="1" fill="#d6d6d6"/><rect x="2415" y="212" width="4" height="1" fill="#d6d6d6"/><rect x="2436" y="199" width="10.5" height="11.5" rx="1" fill="#d6d6d6"/><path d="M2447.5 203L2450 200V210L2447.5 207Z" fill="#d6d6d6"/><path d="M2462 198L2475 212H2462Z" fill="#d6d6d6"/><path d="M2465 205L2469.5 210H2465Z" fill="#444"/><path d="M2488 201q3.5 -2.5 7 0t7 0M2488 205q3.5 -2.5 7 0t7 0M2488 209q3.5 -2.5 7 0t7 0" fill="none" stroke="#d6d6d6" stroke-width="1.3"/><circle cx="2518" cy="201" r="3" fill="none" stroke="#d6d6d6" stroke-width="2" stroke-dasharray="1.3 .8"/><circle cx="2523.5" cy="207.5" r="3.5" fill="none" stroke="#d6d6d6" stroke-width="2.2" stroke-dasharray="1.5 .8"/><rect x="2353" y="223" width="204" height="20" fill="#636363"/><path d="M2543 231H2550L2546.5 235Z" fill="#ddd"/><rect x="2353.5" y="249.5" width="194" height="196" rx="2" fill="#4f4f4f" stroke="#3e3e3e"/><path d="M2359 256H2365L2362 260Z" fill="#ccc"/><rect x="2535" y="255" width="1" height="1" fill="#999"/><rect x="2535" y="257" width="1" height="1" fill="#999"/><rect x="2535" y="259" width="1" height="1" fill="#999"/><rect x="2537" y="255" width="1" height="1" fill="#999"/><rect x="2537" y="257" width="1" height="1" fill="#999"/><rect x="2537" y="259" width="1" height="1" fill="#999"/><rect x="2539" y="255" width="1" height="1" fill="#999"/><rect x="2539" y="257" width="1" height="1" fill="#999"/><rect x="2539" y="259" width="1" height="1" fill="#999"/><rect x="2417.5" y="275.5" width="11" height="11" fill="#575757" stroke="#474747"/><rect x="2353.5" y="450.5" width="194" height="47" rx="2" fill="#4f4f4f" stroke="#3e3e3e"/><path d="M2359 457H2365L2362 461Z" fill="#ccc"/><rect x="2535" y="456" width="1" height="1" fill="#999"/><rect x="2535" y="458" width="1" height="1" fill="#999"/><rect x="2535" y="460" width="1" height="1" fill="#999"/><rect x="2537" y="456" width="1" height="1" fill="#999"/><rect x="2537" y="458" width="1" height="1" fill="#999"/><rect x="2537" y="460" width="1" height="1" fill="#999"/><rect x="2539" y="456" width="1" height="1" fill="#999"/><rect x="2539" y="458" width="1" height="1" fill="#999"/><rect x="2539" y="460" width="1" height="1" fill="#999"/><rect x="2357.5" y="472.5" width="159" height="19" fill="#575757" stroke="#4a4a4a"/><rect x="2522.5" y="472.5" width="20" height="19" fill="#c5308a" stroke="#111" stroke-width="1.2"/><rect x="2549" y="249" width="8" height="1031" fill="#3f3f3f"/></svg>
<div class="t" style="left:2359px;top:170px;color:#c8c8c8;font-size:12px"><i class="c">搜</i><i class="c">索</i><i class="c">所</i><i class="c">有</i><i class="c">对</i><i class="c">象</i>...</div>
<div class="t" style="left:2358px;top:226px;color:#eee;font-size:12px"><i class="c">标</i><i class="c">准</i><i class="c">基</i><i class="c">本</i><i class="c">体</i></div>
<div class="t" style="left:2372px;top:251px;color:#fff;font-size:12px;font-weight:bold"><i class="c">对</i><i class="c">象</i><i class="c">类</i><i class="c">型</i></div>
<div class="t" style="left:2434px;top:274px;color:#8a8a8a;font-size:12px"><i class="c">自</i><i class="c">动</i><i class="c">栅</i><i class="c">格</i></div>
<div class="btn" style="left:2358px;top:296px;width:90px;height:20px"><i class="c">长</i><i class="c">方</i><i class="c">体</i></div>
<div class="btn" style="left:2453px;top:296px;width:89px;height:20px"><i class="c">圆</i><i class="c">锥</i><i class="c">体</i></div>
<div class="btn" style="left:2358px;top:321px;width:90px;height:20px"><i class="c">球</i><i class="c">体</i></div>
<div class="btn" style="left:2453px;top:321px;width:89px;height:20px"><i class="c">几</i><i class="c">何</i><i class="c">球</i><i class="c">体</i></div>
<div class="btn" style="left:2358px;top:346px;width:90px;height:20px"><i class="c">圆</i><i class="c">柱</i><i class="c">体</i></div>
<div class="btn" style="left:2453px;top:346px;width:89px;height:20px"><i class="c">管</i><i class="c">状</i><i class="c">体</i></div>
<div class="btn" style="left:2358px;top:371px;width:90px;height:20px"><i class="c">圆</i><i class="c">环</i></div>
<div class="btn" style="left:2453px;top:371px;width:89px;height:20px"><i class="c">四</i><i class="c">棱</i><i class="c">锥</i></div>
<div class="btn" style="left:2358px;top:396px;width:90px;height:20px"><i class="c">茶</i><i class="c">壶</i></div>
<div class="btn" style="left:2453px;top:396px;width:89px;height:20px"><i class="c">平</i><i class="c">面</i></div>
<div class="btn" style="left:2358px;top:421px;width:90px;height:20px"><i class="c">加</i><i class="c">强</i><i class="c">型</i><i class="c">文</i><i class="c">本</i></div>
<div class="t" style="left:2372px;top:452px;color:#fff;font-size:12px;font-weight:bold"><i class="c">名</i><i class="c">称</i><i class="c">和</i><i class="c">颜</i><i class="c">色</i></div>
<div class="a" style="left:2412px;top:1060px;width:124px;height:37px;border:1.5px solid #f0b040;border-radius:7px;background:#fff;overflow:hidden">
<div class="a" style="left:0;top:0;width:40px;height:37px;background:linear-gradient(45deg,#fff7ea,#ffd895)"></div></div>
<svg style="left:0;top:0" width="2560" height="1400"><defs><linearGradient id="qk" x1="0" y1="0" x2="1" y2="1"><stop offset="0" stop-color="#b35a10"/><stop offset=".5" stop-color="#e8a040"/><stop offset="1" stop-color="#b05510"/></linearGradient></defs><g fill="none" stroke="url(#qk)" stroke-width="2.3" stroke-linecap="round"><path d="M2428.5 1087A5.2 5.2 0 1 1 2432.8 1081.8V1084.5"/><path d="M2427.5 1075.5A7.5 7.5 0 0 1 2440.5 1077.5A5 5 0 0 1 2439.5 1087H2436"/></g></svg>
<div class="t" style="left:2466px;top:1070px;color:#222;font-size:14px;line-height:16px;font-weight:bold"><i class="c">夸</i><i class="c">克</i><i class="c">网</i><i class="c">盘</i></div>
<svg style="left:2520px;top:1082px" width="16" height="16"><path d="M8 3L4 9H7L6 13L10 7H7Z" fill="#e8a020"/></svg>
<div class="a" style="left:44px;top:1285px;width:14px;height:16px;background:#5e5e5e;border-radius:3px"></div><div class="a" style="left:60px;top:1285px;width:123px;height:16px;background:#666;border-radius:3px"></div><div class="a" style="left:185px;top:1285px;width:14px;height:16px;background:#5e5e5e;border-radius:3px"></div><div class="t" style="left:99px;top:1286px;color:#eee;font-size:11.5px;word-spacing:3px;letter-spacing:.5px">0 / 100</div>
<svg style="left:0;top:0" width="260" height="1400"><path d="M53 1289L49.5 1293L53 1297M190 1289L193.5 1293L190 1297" fill="none" stroke="#ddd" stroke-width="1"/><rect x="36" y="1287" width="1" height="1" fill="#bbb"/><rect x="38" y="1288" width="1" height="1" fill="#bbb"/><rect x="36" y="1290" width="1" height="1" fill="#bbb"/><rect x="38" y="1291" width="1" height="1" fill="#bbb"/><rect x="36" y="1293" width="1" height="1" fill="#bbb"/><rect x="38" y="1294" width="1" height="1" fill="#bbb"/><rect x="36" y="1296" width="1" height="1" fill="#bbb"/><rect x="38" y="1297" width="1" height="1" fill="#bbb"/><rect x="36" y="1299" width="1" height="1" fill="#bbb"/><rect x="38" y="1300" width="1" height="1" fill="#bbb"/><rect x="36" y="1302" width="1" height="1" fill="#bbb"/><rect x="38" y="1303" width="1" height="1" fill="#bbb"/><rect x="36" y="1305" width="1" height="1" fill="#bbb"/><rect x="38" y="1306" width="1" height="1" fill="#bbb"/><rect x="36" y="1308" width="1" height="1" fill="#bbb"/><rect x="38" y="1309" width="1" height="1" fill="#bbb"/><rect x="36" y="1311" width="1" height="1" fill="#bbb"/><rect x="38" y="1312" width="1" height="1" fill="#bbb"/><rect x="36" y="1314" width="1" height="1" fill="#bbb"/><rect x="38" y="1315" width="1" height="1" fill="#bbb"/><rect x="36" y="1317" width="1" height="1" fill="#bbb"/><rect x="38" y="1318" width="1" height="1" fill="#bbb"/><rect x="36" y="1320" width="1" height="1" fill="#bbb"/><rect x="38" y="1321" width="1" height="1" fill="#bbb"/><rect x="36" y="1323" width="1" height="1" fill="#bbb"/><rect x="38" y="1324" width="1" height="1" fill="#bbb"/><rect x="36" y="1326" width="1" height="1" fill="#bbb"/><rect x="38" y="1327" width="1" height="1" fill="#bbb"/><rect x="36" y="1329" width="1" height="1" fill="#bbb"/><rect x="38" y="1330" width="1" height="1" fill="#bbb"/><rect x="36" y="1332" width="1" height="1" fill="#bbb"/><rect x="38" y="1333" width="1" height="1" fill="#bbb"/><rect x="36" y="1335" width="1" height="1" fill="#bbb"/><rect x="38" y="1336" width="1" height="1" fill="#bbb"/><rect x="36" y="1338" width="1" height="1" fill="#bbb"/><rect x="38" y="1339" width="1" height="1" fill="#bbb"/><rect x="36" y="1341" width="1" height="1" fill="#bbb"/><rect x="38" y="1342" width="1" height="1" fill="#bbb"/><g fill="#ccc"><rect x="57" y="1314" width="3" height="1"/><rect x="57" y="1316" width="3" height="1"/><rect x="57" y="1318" width="3" height="1"/><rect x="57" y="1320" width="3" height="1"/><rect x="57" y="1322" width="3" height="1"/></g><path d="M62 1319Q64 1310 66.5 1317Q69 1324 71 1316" fill="none" stroke="#3ec4c4" stroke-width="1.3"/></svg>
<div class="a" style="left:43px;top:1305px;width:2467px;height:1px;background:#111"></div>
<div class="a" style="left:93px;top:1306px;width:2417px;height:25px;background:#2b2b2b"></div>
<div class="a" style="left:93px;top:1331px;width:2417px;height:12px;background:#2e2e2e;border-top:1px solid #3a3a3a"></div>
<svg style="left:0;top:0" width="2560" height="1400"><rect x="100" y="1308" width="7" height="23" fill="#8a8a2a"/><rect x="103.0" y="1307" width="1" height="11" fill="#8a8a8a"/><rect x="103.0" y="1318" width="1" height="13" fill="#555"/><rect x="127.0" y="1307" width="1" height="11" fill="#8a8a8a"/><rect x="150.9" y="1307" width="1" height="11" fill="#8a8a8a"/><rect x="174.9" y="1307" width="1" height="11" fill="#8a8a8a"/><rect x="198.8" y="1307" width="1" height="11" fill="#8a8a8a"/><rect x="222.8" y="1307" width="1" height="11" fill="#8a8a8a"/><rect x="222.8" y="1318" width="1" height="13" fill="#555"/><rect x="246.8" y="1307" width="1" height="11" fill="#8a8a8a"/><rect x="270.7" y="1307" width="1" height="11" fill="#8a8a8a"/><rect x="294.7" y="1307" width="1" height="11" fill="#8a8a8a"/><rect x="318.6" y="1307" width="1" height="11" fill="#8a8a8a"/><rect x="342.6" y="1307" width="1" height="11" fill="#8a8a8a"/><rect x="342.6" y="1318" width="1" height="13" fill="#555"/><rect x="366.6" y="1307" width="1" height="11" fill="#8a8a8a"/><rect x="390.5" y="1307" width="1" height="11" fill="#8a8a8a"/><rect x="414.5" y="1307" width="1" height="11" fill="#8a8a8a"/><rect x="438.4" y="1307" width="1" height="11" fill="#8a8a8a"/><rect x="462.4" y="1307" width="1" height="11" fill="#8a8a8a"/><rect x="462.4" y="1318" width="1" height="13" fill="#555"/><rect x="486.4" y="1307" width="1" height="11" fill="#8a8a8a"/><rect x="510.3" y="1307" width="1" height="11" fill="#8a8a8a"/><rect x="534.3" y="1307" width="1" height="11" fill="#8a8a8a"/><rect x="558.2" y="1307" width="1" height="11" fill="#8a8a8a"/><rect x="582.2" y="1307" width="1" height="11" fill="#8a8a8a"/><rect x="582.2" y="1318" width="1" height="13" fill="#555"/><rect x="606.2" y="1307" width="1" height="11" fill="#8a8a8a"/><rect x="630.1" y="1307" width="1" height="11" fill="#8a8a8a"/><rect x="654.1" y="1307" width="1" height="11" fill="#8a8a8a"/><rect x="678.0" y="1307" width="1" height="11" fill="#8a8a8a"/><rect x="702.0" y="1307" width="1" height="11" fill="#8a8a8a"/><rect x="702.0" y="1318" width="1" height="13" fill="#555"/><rect x="726.0" y="1307" width="1" height="11" fill="#8a8a8a"/><rect x="749.9" y="1307" width="1" height="11" fill="#8a8a8a"/><rect x="773.9" y="1307" width="1" height="11" fill="#8a8a8a"/><rect x="797.8" y="1307" width="1" height="11" fill="#8a8a8a"/><rect x="821.8" y="1307" width="1" height="11" fill="#8a8a8a"/><rect x="821.8" y="1318" width="1" height="13" fill="#555"/><rect x="845.8" y="1307" width="1" height="11" fill="#8a8a8a"/><rect x="869.7" y="1307" width="1" height="11" fill="#8a8a8a"/><rect x="893.7" y="1307" width="1" height="11" fill="#8a8a8a"/><rect x="917.6" y="1307" width="1" height="11" fill="#8a8a8a"/><rect x="941.6" y="1307" width="1" height="11" fill="#8a8a8a"/><rect x="941.6" y="1318" width="1" height="13" fill="#555"/><rect x="965.6" y="1307" width="1" height="11" fill="#8a8a8a"/><rect x="989.5" y="1307" width="1" height="11" fill="#8a8a8a"/><rect x="1013.5" y="1307" width="1" height="11" fill="#8a8a8a"/><rect x="1037.4" y="1307" width="1" height="11" fill="#8a8a8a"/><rect x="1061.4" y="1307" width="1" height="11" fill="#8a8a8a"/><rect x="1061.4" y="1318" width="1" height="13" fill="#555"/><rect x="1085.4" y="1307" width="1" height="11" fill="#8a8a8a"/><rect x="1109.3" y="1307" width="1" height="11" fill="#8a8a8a"/><rect x="1133.3" y="1307" width="1" height="11" fill="#8a8a8a"/><rect x="1157.2" y="1307" width="1" height="11" fill="#8a8a8a"/><rect x="1181.2" y="1307" width="1" height="11" fill="#8a8a8a"/><rect x="1181.2" y="1318" width="1" height="13" fill="#555"/><rect x="1205.2" y="1307" width="1" height="11" fill="#8a8a8a"/><rect x="1229.1" y="1307" width="1" height="11" fill="#8a8a8a"/><rect x="1253.1" y="1307" width="1" height="11" fill="#8a8a8a"/><rect x="1277.0" y="1307" width="1" height="11" fill="#8a8a8a"/><rect x="1301.0" y="1307" width="1" height="11" fill="#8a8a8a"/><rect x="1301.0" y="1318" width="1" height="13" fill="#555"/><rect x="1325.0" y="1307" width="1" height="11" fill="#8a8a8a"/><rect x="1348.9" y="1307" width="1" height="11" fill="#8a8a8a"/><rect x="1372.9" y="1307" width="1" height="11" fill="#8a8a8a"/><rect x="1396.8" y="1307" width="1" height="11" fill="#8a8a8a"/><rect x="1420.8" y="1307" width="1" height="11" fill="#8a8a8a"/><rect x="1420.8" y="1318" width="1" height="13" fill="#555"/><rect x="1444.8" y="1307" width="1" height="11" fill="#8a8a8a"/><rect x="1468.7" y="1307" width="1" height="11" fill="#8a8a8a"/><rect x="1492.7" y="1307" width="1" height="11" fill="#8a8a8a"/><rect x="1516.6" y="1307" width="1" height="11" fill="#8a8a8a"/><rect x="1540.6" y="1307" width="1" height="11" fill="#8a8a8a"/><rect x="1540.6" y="1318" width="1" height="13" fill="#555"/><rect x="1564.6" y="1307" width="1" height="11" fill="#8a8a8a"/><rect x="1588.5" y="1307" width="1" height="11" fill="#8a8a8a"/><rect x="1612.5" y="1307" width="1" height="11" fill="#8a8a8a"/><rect x="1636.4" y="1307" width="1" height="11" fill="#8a8a8a"/><rect x="1660.4" y="1307" width="1" height="11" fill="#8a8a8a"/><rect x="1660.4" y="1318" width="1" height="13" fill="#555"/><rect x="1684.4" y="1307" width="1" height="11" fill="#8a8a8a"/><rect x="1708.3" y="1307" width="1" height="11" fill="#8a8a8a"/><rect x="1732.3" y="1307" width="1" height="11" fill="#8a8a8a"/><rect x="1756.2" y="1307" width="1" height="11" fill="#8a8a8a"/><rect x="1780.2" y="1307" width="1" height="11" fill="#8a8a8a"/><rect x="1780.2" y="1318" width="1" height="13" fill="#555"/><rect x="1804.2" y="1307" width="1" height="11" fill="#8a8a8a"/><rect x="1828.1" y="1307" width="1" height="11" fill="#8a8a8a"/><rect x="1852.1" y="1307" width="1" height="11" fill="#8a8a8a"/><rect x="1876.0" y="1307" width="1" height="11" fill="#8a8a8a"/><rect x="1900.0" y="1307" width="1" height="11" fill="#8a8a8a"/><rect x="1900.0" y="1318" width="1" height="13" fill="#555"/><rect x="1924.0" y="1307" width="1" height="11" fill="#8a8a8a"/><rect x="1947.9" y="1307" width="1" height="11" fill="#8a8a8a"/><rect x="1971.9" y="1307" width="1" height="11" fill="#8a8a8a"/><rect x="1995.8" y="1307" width="1" height="11" fill="#8a8a8a"/><rect x="2019.8" y="1307" width="1" height="11" fill="#8a8a8a"/><rect x="2019.8" y="1318" width="1" height="13" fill="#555"/><rect x="2043.8" y="1307" width="1" height="11" fill="#8a8a8a"/><rect x="2067.7" y="1307" width="1" height="11" fill="#8a8a8a"/><rect x="2091.7" y="1307" width="1" height="11" fill="#8a8a8a"/><rect x="2115.6" y="1307" width="1" height="11" fill="#8a8a8a"/><rect x="2139.6" y="1307" width="1" height="11" fill="#8a8a8a"/><rect x="2139.6" y="1318" width="1" height="13" fill="#555"/><rect x="2163.6" y="1307" width="1" height="11" fill="#8a8a8a"/><rect x="2187.5" y="1307" width="1" height="11" fill="#8a8a8a"/><rect x="2211.5" y="1307" width="1" height="11" fill="#8a8a8a"/><rect x="2235.4" y="1307" width="1" height="11" fill="#8a8a8a"/><rect x="2259.4" y="1307" width="1" height="11" fill="#8a8a8a"/><rect x="2259.4" y="1318" width="1" height="13" fill="#555"/><rect x="2283.4" y="1307" width="1" height="11" fill="#8a8a8a"/><rect x="2307.3" y="1307" width="1" height="11" fill="#8a8a8a"/><rect x="2331.3" y="1307" width="1" height="11" fill="#8a8a8a"/><rect x="2355.2" y="1307" width="1" height="11" fill="#8a8a8a"/><rect x="2379.2" y="1307" width="1" height="11" fill="#8a8a8a"/><rect x="2379.2" y="1318" width="1" height="13" fill="#555"/><rect x="2403.2" y="1307" width="1" height="11" fill="#8a8a8a"/><rect x="2427.1" y="1307" width="1" height="11" fill="#8a8a8a"/><rect x="2451.1" y="1307" width="1" height="11" fill="#8a8a8a"/><rect x="2475.0" y="1307" width="1" height="11" fill="#8a8a8a"/><rect x="2499.0" y="1307" width="1" height="11" fill="#8a8a8a"/><rect x="2499.0" y="1318" width="1" height="13" fill="#555"/></svg>
<div class="t" style="left:88.5px;top:1317px;width:30px;text-align:center;color:#e8e8a0;font-size:11px">0</div>
<div class="t" style="left:208.3px;top:1317px;width:30px;text-align:center;color:#ddd;font-size:11px">5</div>
<div class="t" style="left:328.1px;top:1317px;width:30px;text-align:center;color:#ddd;font-size:11px">10</div>
<div class="t" style="left:447.9px;top:1317px;width:30px;text-align:center;color:#ddd;font-size:11px">15</div>
<div class="t" style="left:567.7px;top:1317px;width:30px;text-align:center;color:#ddd;font-size:11px">20</div>
<div class="t" style="left:687.5px;top:1317px;width:30px;text-align:center;color:#ddd;font-size:11px">25</div>
<div class="t" style="left:807.3px;top:1317px;width:30px;text-align:center;color:#ddd;font-size:11px">30</div>
<div class="t" style="left:927.1px;top:1317px;width:30px;text-align:center;color:#ddd;font-size:11px">35</div>
<div class="t" style="left:1046.9px;top:1317px;width:30px;text-align:center;color:#ddd;font-size:11px">40</div>
<div class="t" style="left:1166.7px;top:1317px;width:30px;text-align:center;color:#ddd;font-size:11px">45</div>
<div class="t" style="left:1286.5px;top:1317px;width:30px;text-align:center;color:#ddd;font-size:11px">50</div>
<div class="t" style="left:1406.3px;top:1317px;width:30px;text-align:center;color:#ddd;font-size:11px">55</div>
<div class="t" style="left:1526.1px;top:1317px;width:30px;text-align:center;color:#ddd;font-size:11px">60</div>
<div class="t" style="left:1645.9px;top:1317px;width:30px;text-align:center;color:#ddd;font-size:11px">65</div>
<div class="t" style="left:1765.7px;top:1317px;width:30px;text-align:center;color:#ddd;font-size:11px">70</div>
<div class="t" style="left:1885.5px;top:1317px;width:30px;text-align:center;color:#ddd;font-size:11px">75</div>
<div class="t" style="left:2005.3px;top:1317px;width:30px;text-align:center;color:#ddd;font-size:11px">80</div>
<div class="t" style="left:2125.1px;top:1317px;width:30px;text-align:center;color:#ddd;font-size:11px">85</div>
<div class="t" style="left:2244.9px;top:1317px;width:30px;text-align:center;color:#ddd;font-size:11px">90</div>
<div class="t" style="left:2364.7px;top:1317px;width:30px;text-align:center;color:#ddd;font-size:11px">95</div>
<div class="t" style="left:2484.5px;top:1317px;width:30px;text-align:center;color:#ddd;font-size:11px">100</div>
<div class="a" style="left:5px;top:1349px;width:97px;height:23px;background:#dcc4c4;border:2px solid #f0f0f0;outline:1px solid #888"></div>
<div class="a" style="left:5px;top:1372px;width:97px;height:23px;background:#fff;border:2px solid #ddd;outline:1px solid #888"></div>
<div class="t" style="left:10px;top:1375px;color:#777;font-size:12px;width:90px;overflow:hidden"><i class="c">脚</i><i class="c">本</i><i class="c">迷</i><i class="c">你</i><i class="c">侦</i><i class="c">听</i>:</div>
<div class="a" style="left:105px;top:1347px;width:2px;height:50px;background:#222"></div>
<div class="t" style="left:112px;top:1355px;color:#f0f0f0;font-size:12px"><i class="c">未</i><i class="c">选</i><i class="c">定</i><i class="c">任</i><i class="c">何</i><i class="c">对</i><i class="c">象</i></div>
<div class="t m" style="left:112px;top:1380px;color:#f0f0f0;font-size:12px">0 </div><div class="t" style="left:123px;top:1380px;color:#f0f0f0;font-size:12px"><i class="c">视</i><i class="c">口</i><i class="c">明</i><i class="c">暗</i><i class="c">器</i><i class="c">正</i><i class="c">在</i><i class="c">编</i><i class="c">译</i>...</div>
<svg style="left:0;top:0" width="2560" height="1400"><g fill="none" stroke="#2a2a2a" stroke-width="1.3"><path d="M1640 1358V1354H1644M1652 1354H1656V1358M1640 1366V1370H1644M1652 1370H1656V1366"/><path d="M1644 1364L1648 1359L1652 1364Z"/></g><path d="M1658 1374L1658 1369L1653 1374Z" fill="#ddd"/><g fill="none" stroke="#2a2a2a" stroke-width="1.3"><rect x="1668" y="1361" width="11" height="9"/><path d="M1670 1361V1358A3.5 3.5 0 0 1 1677 1358V1361"/></g><rect x="1693.5" y="1354.5" width="14" height="14" fill="none" stroke="#ddd" stroke-width="1.2"/><circle cx="1700.5" cy="1361.5" r="3.2" fill="none" stroke="#ddd" stroke-width="1.5"/><path d="M1694 1355L1698 1359M1707 1355L1703 1359M1694 1368L1698 1364M1707 1368L1703 1364" stroke="#ddd" stroke-width="1.2"/><rect x="1732" y="1353" width="57" height="17" fill="#595959"/><rect x="1818" y="1353" width="57" height="17" fill="#595959"/><rect x="1904" y="1353" width="57" height="17" fill="#595959"/><rect x="1826" y="1378" width="1.5" height="16" fill="#111"/><rect x="1833" y="1376" width="20" height="20" rx="2" fill="#595959"/><path d="M1843 1380L1849 1382V1387Q1848 1392 1843 1393Q1838 1392 1837 1387V1382Z" fill="#ddd"/><path d="M1843 1380V1393M1837 1386H1849" stroke="#555" stroke-width="1"/><circle cx="1898" cy="1386" r="4.5" fill="#3fcc3f"/><rect x="1909" y="1376" width="20" height="20" rx="2" fill="#595959"/><circle cx="1919" cy="1386" r="7" fill="#f4f4f4"/><text x="1915.5" y="1390.5" font-size="11" font-weight="bold" fill="#333" font-family="Liberation Sans">0</text><rect x="1935" y="1378" width="1.5" height="16" fill="#111"/><path d="M1951 1380L1957 1383V1390L1951 1393L1945 1390V1383Z M1945 1383L1951 1386L1957 1383 M1951 1386V1393" fill="none" stroke="#ddd" stroke-width="1.2"/><g fill="#e6e6e6"><rect x="2090" y="1355" width="2" height="12"/><path d="M2093 1361L2097 1356V1366Z M2097 1361L2102 1356V1366Z"/><path d="M2117 1361L2122 1356V1366Z"/><rect x="2123" y="1356" width="2" height="10"/><rect x="2126" y="1356" width="2" height="10"/><path d="M2141 1354L2153 1361L2141 1368Z"/><rect x="2162" y="1356" width="2" height="10"/><rect x="2165" y="1356" width="2" height="10"/><path d="M2169 1356L2174 1361L2169 1366Z"/><path d="M2188 1356L2192 1361L2188 1366Z M2192 1356L2196 1361L2192 1366Z"/><rect x="2199" y="1355" width="2" height="12"/><path d="M2091 1385L2096 1380V1390Z M2103 1385L2098 1380V1390Z"/></g><path d="M2156 1373L2156 1368L2151 1373Z" fill="#ddd"/><rect x="2110" y="1355" width="1.5" height="12" fill="#111"/><rect x="2183" y="1355" width="1.5" height="12" fill="#111"/><rect x="2110" y="1376" width="1.5" height="16" fill="#111"/><rect x="2183" y="1376" width="1.5" height="16" fill="#111"/><rect x="2112" y="1375" width="68" height="17" fill="#595959"/><path d="M2172 1382L2175 1379L2178 1382ZM2172 1386L2175 1389L2178 1386Z" fill="#ccc"/><circle cx="2193" cy="1381" r="5" fill="#ddd"/><path d="M2193 1381V1377M2193 1381H2196" stroke="#444" stroke-width="1.2"/><circle cx="2198" cy="1388" r="3.5" fill="none" stroke="#f6ae1a" stroke-width="2.2" stroke-dasharray="1.5 .8"/><rect x="2218" y="1351" width="39" height="42" rx="3" fill="#4d4d4d"/><path d="M2233 1360H2241V1368H2249V1376H2241V1384H2233V1376H2225V1368H2233Z" fill="none" stroke="#2e2e2e" stroke-width="1.3"/><path d="M2243 1378L2251 1372" stroke="#2e2e2e" stroke-width="1.3"/><circle cx="2249" cy="1372" r="2.5" fill="none" stroke="#2e2e2e" stroke-width="1.2"/><rect x="2264" y="1351" width="63" height="19" rx="2" fill="#5a5a5a"/><rect x="2332" y="1351" width="111" height="19" fill="#595959"/><path d="M2429 1358H2436L2432.5 1362Z" fill="#ddd"/><rect x="2264" y="1375" width="63" height="19" rx="2" fill="#5a5a5a"/><rect x="2358" y="1375" width="85" height="19" rx="2" fill="#5a5a5a"/><path d="M2338 1392V1381Q2338 1378 2341 1378Q2344 1378 2344 1381V1386Q2344 1389 2347 1389Q2350 1389 2350 1386V1378" fill="none" stroke="#3ec4c4" stroke-width="1.5"/><path d="M2339 1377L2343 1380M2347 1377L2351 1380" stroke="#eee" stroke-width="1"/><path d="M2355 1396L2355 1391L2350 1396Z" fill="#ddd"/><circle cx="2471" cy="1359" r="4.5" fill="none" stroke="#ddd" stroke-width="1.6"/><path d="M2467.5 1362.5L2463 1367" stroke="#ddd" stroke-width="1.8"/><g fill="#3ec4c4"><rect x="2490" y="1354" width="4" height="4"/><rect x="2495" y="1354" width="4" height="4"/><rect x="2495" y="1359" width="4" height="4"/></g><circle cx="2491" cy="1361" r="3.5" fill="#3ec4c4" stroke="#ddd" stroke-width="1.1"/><path d="M2488.5 1363.5L2485 1367" stroke="#ddd" stroke-width="1.5"/><path d="M2508 1358V1355H2511M2519 1355H2522V1358M2508 1365V1368H2511M2519 1368H2522V1365" fill="none" stroke="#eee" stroke-width="1.2"/><path d="M2515 1356L2520 1358.5V1364L2515 1366.5L2510 1364V1358.5Z" fill="#3ec4c4"/><path d="M2526 1371L2526 1366L2521 1371Z" fill="#ddd"/><path d="M2541 1354L2545 1356V1363L2541 1365L2538 1363V1356Z" fill="#3ec4c4"/><path d="M2532 1363L2535 1361L2538 1363L2535 1365Z M2535 1366L2538 1364L2541 1366L2538 1368Z" fill="#ccc"/><path d="M2549 1371L2549 1366L2544 1371Z" fill="#ddd"/><path d="M2465 1376L2475 1382L2465 1389L2467 1382Z" fill="none" stroke="#ddd" stroke-width="1.4"/><path d="M2480 1393L2480 1388L2475 1393Z" fill="#ddd"/><path d="M2489 1390Q2485 1386 2486 1384L2488 1384L2490 1386V1377.5Q2491 1376 2492 1377.5V1383V1376Q2493 1375 2494 1376V1383V1376.5Q2495 1375.5 2496 1376.5V1383V1378Q2497 1377 2498 1378V1387Q2497 1391 2494 1391Z" fill="#ddd"/><path d="M2503 1393L2503 1388L2498 1393Z" fill="#ddd"/><path d="M2515 1377A5 5 0 0 0 2511 1383H2515Z" fill="#3ec4c4"/><path d="M2515 1377A5 5 0 0 1 2520 1382L2515 1383Z" fill="#ddd"/><ellipse cx="2516" cy="1384" rx="8" ry="3" transform="rotate(-30 2516 1384)" fill="none" stroke="#ddd" stroke-width="1"/><path d="M2526 1393L2526 1388L2521 1393Z" fill="#ddd"/><rect x="2531" y="1376" width="15" height="15" fill="#ddd"/><rect x="2533" y="1384" width="6" height="6" fill="none" stroke="#333" stroke-width="1.2"/><path d="M2538 1385L2544 1379M2540 1378.5H2544.5V1383" fill="none" stroke="#333" stroke-width="1.2"/></svg>
<div class="t m" style="left:1717px;top:1355px;color:#eee;font-size:12px;font-weight:bold">X:</div>
<div class="t m" style="left:1803px;top:1355px;color:#eee;font-size:12px;font-weight:bold">Y:</div>
<div class="t m" style="left:1889px;top:1355px;color:#eee;font-size:12px;font-weight:bold">Z:</div>
<div class="t m" style="left:1736px;top:1355px;color:#8a8a8a;font-size:12px">0.0</div>
<div class="t m" style="left:1822px;top:1355px;color:#8a8a8a;font-size:12px">0.0</div>
<div class="t m" style="left:1908px;top:1355px;color:#8a8a8a;font-size:12px">0.0</div>
<div class="t" style="left:1977px;top:1355px;color:#f0f0f0;font-size:12px"><i class="c">栅</i><i class="c">格</i> = 10.0</div>
<div class="t" style="left:1859px;top:1379px;color:#f0f0f0;font-size:12px"><i class="c">启</i><i class="c">用</i>:</div>
<div class="t" style="left:1969px;top:1379px;color:#f0f0f0;font-size:12px"><i class="c">添</i><i class="c">加</i>…<i class="c">标</i><i class="c">记</i></div>
<div class="t" style="left:2116px;top:1377px;color:#ddd;font-size:11px">0</div>
<div class="t" style="left:2265px;top:1354px;color:#eee;font-size:12px"><i class="c">自</i><i class="c">动</i><i class="c">关</i><i class="c">键</i><i class="c">点</i></div>
<div class="t" style="left:2337px;top:1354px;color:#eee;font-size:12px"><i class="c">选</i><i class="c">定</i><i class="c">对</i><i class="c">象</i></div>
<div class="t" style="left:2265px;top:1378px;color:#eee;font-size:12px"><i class="c">设</i><i class="c">置</i><i class="c">关</i><i class="c">键</i><i class="c">点</i></div>
<div class="t" style="left:2360px;top:1378px;color:#eee;font-size:12px"><i class="c">关</i><i class="c">键</i><i class="c">点</i><i class="c">过</i><i class="c">滤</i><i class="c">器</i>...</div>
</body></html>
